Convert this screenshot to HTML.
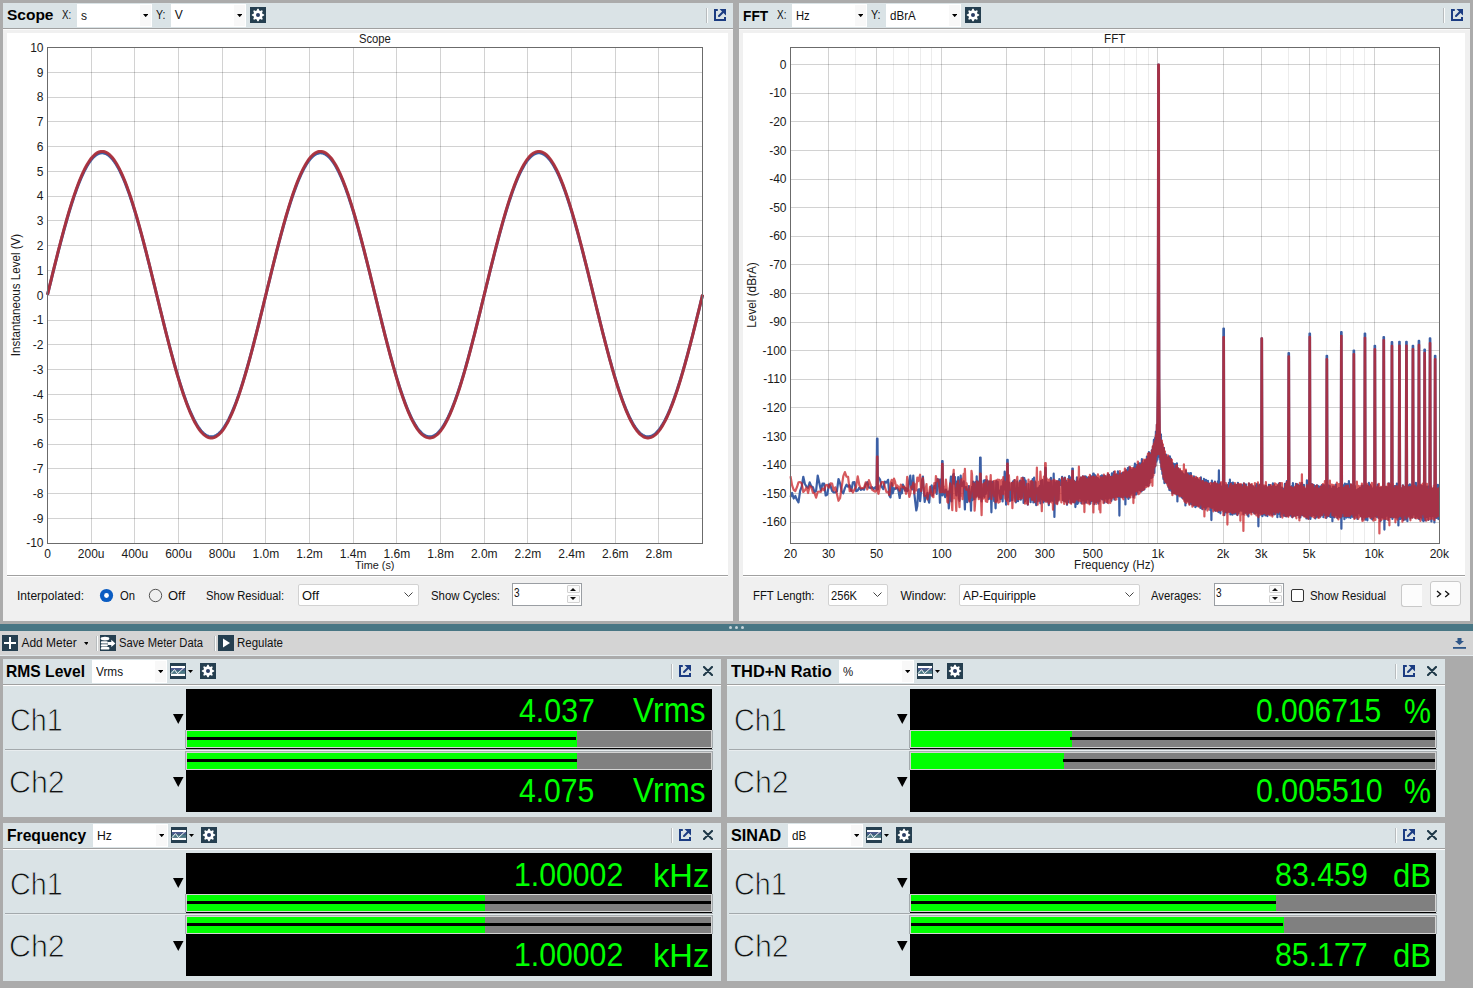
<!DOCTYPE html><html><head><meta charset="utf-8"><style>
*{margin:0;padding:0;box-sizing:border-box}
html,body{width:1473px;height:988px;overflow:hidden;background:#ababab;font-family:"Liberation Sans",sans-serif}
.r{position:absolute}
.t{position:absolute;white-space:nowrap}
svg{position:absolute;left:0;top:0}
</style></head><body>
<div class="r" style="left:3px;top:3px;width:730px;height:25px;background:#dae3e6;"></div>
<div class="r" style="left:3px;top:28px;width:730px;height:1px;background:#a0a0a0;"></div>
<div class="r" style="left:3px;top:29px;width:730px;height:1px;background:#fbfbfb;"></div>
<div class="r" style="left:3px;top:30px;width:730px;height:591px;background:#f0f0f0;"></div>
<div class="r" style="left:7px;top:33px;width:721px;height:542px;background:#fff;"></div>
<div class="r" style="left:7px;top:575px;width:721px;height:1px;background:#a0a0a0;"></div>
<div class="r" style="left:7px;top:576px;width:721px;height:1px;background:#ffffff;"></div>
<div class="r" style="left:739px;top:3px;width:731px;height:25px;background:#dae3e6;"></div>
<div class="r" style="left:739px;top:28px;width:731px;height:1px;background:#a0a0a0;"></div>
<div class="r" style="left:739px;top:29px;width:731px;height:1px;background:#fbfbfb;"></div>
<div class="r" style="left:739px;top:30px;width:731px;height:591px;background:#f0f0f0;"></div>
<div class="r" style="left:743px;top:33px;width:722px;height:542px;background:#fff;"></div>
<div class="r" style="left:743px;top:575px;width:722px;height:1px;background:#a0a0a0;"></div>
<div class="r" style="left:743px;top:576px;width:722px;height:1px;background:#ffffff;"></div>
<div class="r" style="left:0px;top:624px;width:1473px;height:7px;background:#487684;"></div>
<div class="r" style="left:728.8px;top:625.8px;width:3.4px;height:3.4px;border-radius:50%;background:#c5d3d8"></div>
<div class="r" style="left:734.8px;top:625.8px;width:3.4px;height:3.4px;border-radius:50%;background:#c5d3d8"></div>
<div class="r" style="left:740.8px;top:625.8px;width:3.4px;height:3.4px;border-radius:50%;background:#c5d3d8"></div>
<div class="r" style="left:0px;top:631px;width:1473px;height:24px;background:#d4d4d4;"></div>
<div class="r" style="left:0px;top:655px;width:1473px;height:1px;background:#e3eaed;"></div>
<div class="r" style="left:3px;top:659px;width:718px;height:25px;background:#dae3e6;"></div>
<div class="r" style="left:3px;top:684px;width:718px;height:1px;background:#a9b0b3;"></div>
<div class="r" style="left:3px;top:685px;width:718px;height:132px;background:#dae3e6;"></div>
<div class="r" style="left:727px;top:659px;width:718px;height:25px;background:#dae3e6;"></div>
<div class="r" style="left:727px;top:684px;width:718px;height:1px;background:#a9b0b3;"></div>
<div class="r" style="left:727px;top:685px;width:718px;height:132px;background:#dae3e6;"></div>
<div class="r" style="left:3px;top:823px;width:718px;height:25px;background:#dae3e6;"></div>
<div class="r" style="left:3px;top:848px;width:718px;height:1px;background:#a9b0b3;"></div>
<div class="r" style="left:3px;top:849px;width:718px;height:132px;background:#dae3e6;"></div>
<div class="r" style="left:727px;top:823px;width:718px;height:25px;background:#dae3e6;"></div>
<div class="r" style="left:727px;top:848px;width:718px;height:1px;background:#a9b0b3;"></div>
<div class="r" style="left:727px;top:849px;width:718px;height:132px;background:#dae3e6;"></div>
<svg width="1473" height="988" viewBox="0 0 1473 988" style="shape-rendering:auto">
<path d="M47 518.5H703 M47 493.5H703 M47 468.5H703 M47 444.5H703 M47 419.5H703 M47 394.5H703 M47 369.5H703 M47 344.5H703 M47 320.5H703 M47 295.5H703 M47 270.5H703 M47 245.5H703 M47 220.5H703 M47 196.5H703 M47 171.5H703 M47 146.5H703 M47 121.5H703 M47 97.5H703 M47 72.5H703" stroke="#000" stroke-opacity="0.175" stroke-width="1" fill="none"/>
<path d="M91.5 47V544 M134.5 47V544 M178.5 47V544 M222.5 47V544 M265.5 47V544 M309.5 47V544 M353.5 47V544 M396.5 47V544 M440.5 47V544 M484.5 47V544 M527.5 47V544 M571.5 47V544 M615.5 47V544 M658.5 47V544" stroke="#000" stroke-opacity="0.175" stroke-width="1" fill="none"/>
<path d="M47.50,294.82 L48.44,291.00 L49.37,287.18 L50.31,283.36 L51.24,279.56 L52.18,275.76 L53.12,271.98 L54.05,268.21 L54.99,264.47 L55.92,260.74 L56.86,257.04 L57.79,253.37 L58.73,249.73 L59.67,246.12 L60.60,242.54 L61.54,239.01 L62.47,235.51 L63.41,232.06 L64.35,228.65 L65.28,225.29 L66.22,221.98 L67.15,218.73 L68.09,215.53 L69.02,212.38 L69.96,209.30 L70.90,206.28 L71.83,203.32 L72.77,200.43 L73.70,197.61 L74.64,194.85 L75.58,192.17 L76.51,189.57 L77.45,187.04 L78.38,184.59 L79.32,182.22 L80.25,179.93 L81.19,177.72 L82.13,175.60 L83.06,173.57 L84.00,171.62 L84.93,169.76 L85.87,168.00 L86.81,166.32 L87.74,164.74 L88.68,163.25 L89.61,161.86 L90.55,160.57 L91.49,159.37 L92.42,158.27 L93.36,157.27 L94.29,156.37 L95.23,155.57 L96.16,154.87 L97.10,154.27 L98.04,153.77 L98.97,153.38 L99.91,153.09 L100.84,152.90 L101.78,152.81 L102.72,152.83 L103.65,152.95 L104.59,153.17 L105.52,153.50 L106.46,153.93 L107.39,154.46 L108.33,155.09 L109.27,155.82 L110.20,156.66 L111.14,157.59 L112.07,158.62 L113.01,159.76 L113.95,160.99 L114.88,162.32 L115.82,163.74 L116.75,165.26 L117.69,166.87 L118.63,168.58 L119.56,170.37 L120.50,172.26 L121.43,174.24 L122.37,176.30 L123.30,178.45 L124.24,180.68 L125.18,183.00 L126.11,185.40 L127.05,187.87 L127.98,190.43 L128.92,193.06 L129.86,195.76 L130.79,198.54 L131.73,201.39 L132.66,204.30 L133.60,207.28 L134.53,210.32 L135.47,213.42 L136.41,216.59 L137.34,219.81 L138.28,223.08 L139.21,226.41 L140.15,229.78 L141.09,233.20 L142.02,236.67 L142.96,240.18 L143.89,243.73 L144.83,247.32 L145.76,250.94 L146.70,254.59 L147.64,258.27 L148.57,261.98 L149.51,265.71 L150.44,269.47 L151.38,273.24 L152.32,277.02 L153.25,280.82 L154.19,284.64 L155.12,288.45 L156.06,292.27 L157.00,296.10 L157.93,299.92 L158.87,303.74 L159.80,307.55 L160.74,311.36 L161.67,315.15 L162.61,318.93 L163.55,322.69 L164.48,326.43 L165.42,330.14 L166.35,333.83 L167.29,337.50 L168.23,341.13 L169.16,344.73 L170.10,348.29 L171.03,351.81 L171.97,355.29 L172.90,358.73 L173.84,362.12 L174.78,365.47 L175.71,368.76 L176.65,371.99 L177.58,375.18 L178.52,378.30 L179.46,381.36 L180.39,384.36 L181.33,387.30 L182.26,390.17 L183.20,392.97 L184.14,395.70 L185.07,398.35 L186.01,400.93 L186.94,403.43 L187.88,405.86 L188.81,408.20 L189.75,410.46 L190.69,412.64 L191.62,414.73 L192.56,416.74 L193.49,418.66 L194.43,420.48 L195.37,422.22 L196.30,423.86 L197.24,425.41 L198.17,426.87 L199.11,428.23 L200.04,429.49 L200.98,430.66 L201.92,431.72 L202.85,432.69 L203.79,433.56 L204.72,434.33 L205.66,434.99 L206.60,435.56 L207.53,436.02 L208.47,436.38 L209.40,436.64 L210.34,436.79 L211.28,436.84 L212.21,436.79 L213.15,436.64 L214.08,436.38 L215.02,436.02 L215.95,435.56 L216.89,434.99 L217.83,434.33 L218.76,433.56 L219.70,432.69 L220.63,431.72 L221.57,430.66 L222.51,429.49 L223.44,428.23 L224.38,426.87 L225.31,425.41 L226.25,423.86 L227.18,422.22 L228.12,420.48 L229.06,418.66 L229.99,416.74 L230.93,414.73 L231.86,412.64 L232.80,410.46 L233.74,408.20 L234.67,405.86 L235.61,403.43 L236.54,400.93 L237.48,398.35 L238.41,395.70 L239.35,392.97 L240.29,390.17 L241.22,387.30 L242.16,384.36 L243.09,381.36 L244.03,378.30 L244.97,375.18 L245.90,371.99 L246.84,368.76 L247.77,365.47 L248.71,362.12 L249.65,358.73 L250.58,355.29 L251.52,351.81 L252.45,348.29 L253.39,344.73 L254.32,341.13 L255.26,337.50 L256.20,333.83 L257.13,330.14 L258.07,326.43 L259.00,322.69 L259.94,318.93 L260.88,315.15 L261.81,311.36 L262.75,307.55 L263.68,303.74 L264.62,299.92 L265.55,296.10 L266.49,292.27 L267.43,288.45 L268.36,284.64 L269.30,280.82 L270.23,277.02 L271.17,273.24 L272.11,269.47 L273.04,265.71 L273.98,261.98 L274.91,258.27 L275.85,254.59 L276.78,250.94 L277.72,247.32 L278.66,243.73 L279.59,240.18 L280.53,236.67 L281.46,233.20 L282.40,229.78 L283.34,226.41 L284.27,223.08 L285.21,219.81 L286.14,216.59 L287.08,213.42 L288.02,210.32 L288.95,207.28 L289.89,204.30 L290.82,201.39 L291.76,198.54 L292.69,195.76 L293.63,193.06 L294.57,190.43 L295.50,187.87 L296.44,185.40 L297.37,183.00 L298.31,180.68 L299.25,178.45 L300.18,176.30 L301.12,174.24 L302.05,172.26 L302.99,170.37 L303.92,168.58 L304.86,166.87 L305.80,165.26 L306.73,163.74 L307.67,162.32 L308.60,160.99 L309.54,159.76 L310.48,158.62 L311.41,157.59 L312.35,156.66 L313.28,155.82 L314.22,155.09 L315.16,154.46 L316.09,153.93 L317.03,153.50 L317.96,153.17 L318.90,152.95 L319.83,152.83 L320.77,152.81 L321.71,152.90 L322.64,153.09 L323.58,153.38 L324.51,153.77 L325.45,154.27 L326.39,154.87 L327.32,155.57 L328.26,156.37 L329.19,157.27 L330.13,158.27 L331.06,159.37 L332.00,160.57 L332.94,161.86 L333.87,163.25 L334.81,164.74 L335.74,166.32 L336.68,168.00 L337.62,169.76 L338.55,171.62 L339.49,173.57 L340.42,175.60 L341.36,177.72 L342.30,179.93 L343.23,182.22 L344.17,184.59 L345.10,187.04 L346.04,189.57 L346.97,192.17 L347.91,194.85 L348.85,197.61 L349.78,200.43 L350.72,203.32 L351.65,206.28 L352.59,209.30 L353.53,212.38 L354.46,215.53 L355.40,218.73 L356.33,221.98 L357.27,225.29 L358.20,228.65 L359.14,232.06 L360.08,235.51 L361.01,239.01 L361.95,242.54 L362.88,246.12 L363.82,249.73 L364.76,253.37 L365.69,257.04 L366.63,260.74 L367.56,264.47 L368.50,268.21 L369.43,271.98 L370.37,275.76 L371.31,279.56 L372.24,283.36 L373.18,287.18 L374.11,291.00 L375.05,294.82 L375.99,298.65 L376.92,302.47 L377.86,306.28 L378.79,310.09 L379.73,313.89 L380.67,317.67 L381.60,321.44 L382.54,325.18 L383.47,328.91 L384.41,332.61 L385.34,336.28 L386.28,339.92 L387.22,343.53 L388.15,347.10 L389.09,350.64 L390.02,354.14 L390.96,357.59 L391.90,361.00 L392.83,364.36 L393.77,367.67 L394.70,370.92 L395.64,374.12 L396.57,377.27 L397.51,380.35 L398.45,383.37 L399.38,386.33 L400.32,389.22 L401.25,392.04 L402.19,394.79 L403.13,397.47 L404.06,400.08 L405.00,402.61 L405.93,405.06 L406.87,407.43 L407.80,409.72 L408.74,411.93 L409.68,414.05 L410.61,416.08 L411.55,418.03 L412.48,419.88 L413.42,421.65 L414.36,423.33 L415.29,424.91 L416.23,426.39 L417.16,427.79 L418.10,429.08 L419.04,430.28 L419.97,431.38 L420.91,432.38 L421.84,433.28 L422.78,434.08 L423.71,434.78 L424.65,435.38 L425.59,435.88 L426.52,436.27 L427.46,436.56 L428.39,436.75 L429.33,436.84 L430.27,436.82 L431.20,436.70 L432.14,436.48 L433.07,436.15 L434.01,435.72 L434.94,435.19 L435.88,434.56 L436.82,433.83 L437.75,432.99 L438.69,432.06 L439.62,431.02 L440.56,429.89 L441.50,428.66 L442.43,427.33 L443.37,425.91 L444.30,424.39 L445.24,422.78 L446.18,421.07 L447.11,419.28 L448.05,417.39 L448.98,415.41 L449.92,413.35 L450.85,411.20 L451.79,408.97 L452.73,406.65 L453.66,404.25 L454.60,401.77 L455.53,399.22 L456.47,396.59 L457.41,393.89 L458.34,391.11 L459.28,388.26 L460.21,385.35 L461.15,382.37 L462.08,379.33 L463.02,376.22 L463.96,373.06 L464.89,369.84 L465.83,366.57 L466.76,363.24 L467.70,359.87 L468.64,356.44 L469.57,352.98 L470.51,349.47 L471.44,345.92 L472.38,342.33 L473.31,338.71 L474.25,335.06 L475.19,331.38 L476.12,327.67 L477.06,323.94 L477.99,320.18 L478.93,316.41 L479.87,312.62 L480.80,308.82 L481.74,305.01 L482.67,301.20 L483.61,297.37 L484.55,293.55 L485.48,289.73 L486.42,285.91 L487.35,282.09 L488.29,278.29 L489.22,274.50 L490.16,270.72 L491.10,266.96 L492.03,263.22 L492.97,259.51 L493.90,255.81 L494.84,252.15 L495.78,248.52 L496.71,244.92 L497.65,241.36 L498.58,237.84 L499.52,234.36 L500.45,230.92 L501.39,227.53 L502.33,224.18 L503.26,220.89 L504.20,217.65 L505.13,214.47 L506.07,211.35 L507.01,208.28 L507.94,205.28 L508.88,202.35 L509.81,199.48 L510.75,196.68 L511.69,193.95 L512.62,191.30 L513.56,188.72 L514.49,186.21 L515.43,183.79 L516.36,181.45 L517.30,179.18 L518.24,177.01 L519.17,174.91 L520.11,172.91 L521.04,170.99 L521.98,169.16 L522.92,167.43 L523.85,165.78 L524.79,164.23 L525.72,162.78 L526.66,161.42 L527.59,160.16 L528.53,158.99 L529.47,157.92 L530.40,156.96 L531.34,156.09 L532.27,155.32 L533.21,154.66 L534.15,154.09 L535.08,153.63 L536.02,153.27 L536.95,153.01 L537.89,152.86 L538.82,152.81 L539.76,152.86 L540.70,153.01 L541.63,153.27 L542.57,153.63 L543.50,154.09 L544.44,154.66 L545.38,155.32 L546.31,156.09 L547.25,156.96 L548.18,157.92 L549.12,158.99 L550.06,160.16 L550.99,161.42 L551.93,162.78 L552.86,164.23 L553.80,165.78 L554.73,167.43 L555.67,169.16 L556.61,170.99 L557.54,172.91 L558.48,174.91 L559.41,177.01 L560.35,179.18 L561.29,181.45 L562.22,183.79 L563.16,186.21 L564.09,188.72 L565.03,191.30 L565.96,193.95 L566.90,196.68 L567.84,199.48 L568.77,202.35 L569.71,205.28 L570.64,208.28 L571.58,211.35 L572.52,214.47 L573.45,217.65 L574.39,220.89 L575.32,224.18 L576.26,227.53 L577.20,230.92 L578.13,234.36 L579.07,237.84 L580.00,241.36 L580.94,244.92 L581.87,248.52 L582.81,252.15 L583.75,255.81 L584.68,259.51 L585.62,263.22 L586.55,266.96 L587.49,270.72 L588.43,274.50 L589.36,278.29 L590.30,282.09 L591.23,285.91 L592.17,289.73 L593.10,293.55 L594.04,297.37 L594.98,301.20 L595.91,305.01 L596.85,308.82 L597.78,312.62 L598.72,316.41 L599.66,320.18 L600.59,323.94 L601.53,327.67 L602.46,331.38 L603.40,335.06 L604.34,338.71 L605.27,342.33 L606.21,345.92 L607.14,349.47 L608.08,352.98 L609.01,356.44 L609.95,359.87 L610.89,363.24 L611.82,366.57 L612.76,369.84 L613.69,373.06 L614.63,376.22 L615.57,379.33 L616.50,382.37 L617.44,385.35 L618.37,388.26 L619.31,391.11 L620.24,393.89 L621.18,396.59 L622.12,399.22 L623.05,401.77 L623.99,404.25 L624.92,406.65 L625.86,408.97 L626.80,411.20 L627.73,413.35 L628.67,415.41 L629.60,417.39 L630.54,419.28 L631.47,421.07 L632.41,422.78 L633.35,424.39 L634.28,425.91 L635.22,427.33 L636.15,428.66 L637.09,429.89 L638.03,431.02 L638.96,432.06 L639.90,432.99 L640.83,433.83 L641.77,434.56 L642.71,435.19 L643.64,435.72 L644.58,436.15 L645.51,436.48 L646.45,436.70 L647.38,436.82 L648.32,436.84 L649.26,436.75 L650.19,436.56 L651.13,436.27 L652.06,435.88 L653.00,435.38 L653.94,434.78 L654.87,434.08 L655.81,433.28 L656.74,432.38 L657.68,431.38 L658.61,430.28 L659.55,429.08 L660.49,427.79 L661.42,426.39 L662.36,424.91 L663.29,423.33 L664.23,421.65 L665.17,419.88 L666.10,418.03 L667.04,416.08 L667.97,414.05 L668.91,411.93 L669.85,409.72 L670.78,407.43 L671.72,405.06 L672.65,402.61 L673.59,400.08 L674.52,397.47 L675.46,394.79 L676.40,392.04 L677.33,389.22 L678.27,386.33 L679.20,383.37 L680.14,380.35 L681.08,377.27 L682.01,374.12 L682.95,370.92 L683.88,367.67 L684.82,364.36 L685.75,361.00 L686.69,357.59 L687.63,354.14 L688.56,350.64 L689.50,347.10 L690.43,343.53 L691.37,339.92 L692.31,336.28 L693.24,332.61 L694.18,328.91 L695.11,325.18 L696.05,321.44 L696.98,317.67 L697.92,313.89 L698.86,310.09 L699.79,306.28 L700.73,302.47 L701.66,298.65 L702.60,294.82" stroke="#3c60a6" stroke-width="3" fill="none"/>
<path d="M47.50,294.70 L48.44,290.84 L49.37,286.99 L50.31,283.14 L51.24,279.30 L52.18,275.47 L53.12,271.66 L54.05,267.86 L54.99,264.08 L55.92,260.32 L56.86,256.59 L57.79,252.88 L58.73,249.21 L59.67,245.57 L60.60,241.96 L61.54,238.40 L62.47,234.87 L63.41,231.39 L64.35,227.95 L65.28,224.56 L66.22,221.22 L67.15,217.94 L68.09,214.71 L69.02,211.54 L69.96,208.43 L70.90,205.38 L71.83,202.40 L72.77,199.48 L73.70,196.63 L74.64,193.86 L75.58,191.15 L76.51,188.53 L77.45,185.98 L78.38,183.50 L79.32,181.11 L80.25,178.80 L81.19,176.58 L82.13,174.44 L83.06,172.39 L84.00,170.42 L84.93,168.55 L85.87,166.77 L86.81,165.08 L87.74,163.48 L88.68,161.98 L89.61,160.58 L90.55,159.27 L91.49,158.06 L92.42,156.95 L93.36,155.94 L94.29,155.03 L95.23,154.23 L96.16,153.52 L97.10,152.92 L98.04,152.42 L98.97,152.02 L99.91,151.73 L100.84,151.54 L101.78,151.45 L102.72,151.47 L103.65,151.59 L104.59,151.81 L105.52,152.14 L106.46,152.57 L107.39,153.11 L108.33,153.75 L109.27,154.49 L110.20,155.33 L111.14,156.27 L112.07,157.31 L113.01,158.45 L113.95,159.70 L114.88,161.04 L115.82,162.47 L116.75,164.00 L117.69,165.63 L118.63,167.35 L119.56,169.16 L120.50,171.07 L121.43,173.06 L122.37,175.14 L123.30,177.31 L124.24,179.56 L125.18,181.90 L126.11,184.32 L127.05,186.82 L127.98,189.39 L128.92,192.05 L129.86,194.78 L130.79,197.58 L131.73,200.45 L132.66,203.38 L133.60,206.39 L134.53,209.46 L135.47,212.59 L136.41,215.78 L137.34,219.03 L138.28,222.33 L139.21,225.69 L140.15,229.09 L141.09,232.54 L142.02,236.04 L142.96,239.58 L143.89,243.16 L144.83,246.78 L145.76,250.43 L146.70,254.12 L147.64,257.83 L148.57,261.57 L149.51,265.33 L150.44,269.12 L151.38,272.93 L152.32,276.75 L153.25,280.58 L154.19,284.42 L155.12,288.27 L156.06,292.13 L157.00,295.99 L157.93,299.84 L158.87,303.70 L159.80,307.54 L160.74,311.38 L161.67,315.20 L162.61,319.01 L163.55,322.81 L164.48,326.58 L165.42,330.33 L166.35,334.05 L167.29,337.74 L168.23,341.41 L169.16,345.04 L170.10,348.63 L171.03,352.18 L171.97,355.70 L172.90,359.16 L173.84,362.59 L174.78,365.96 L175.71,369.28 L176.65,372.54 L177.58,375.75 L178.52,378.90 L179.46,381.99 L180.39,385.02 L181.33,387.98 L182.26,390.88 L183.20,393.70 L184.14,396.45 L185.07,399.13 L186.01,401.73 L186.94,404.26 L187.88,406.70 L188.81,409.07 L189.75,411.35 L190.69,413.55 L191.62,415.66 L192.56,417.68 L193.49,419.61 L194.43,421.46 L195.37,423.21 L196.30,424.87 L197.24,426.43 L198.17,427.90 L199.11,429.27 L200.04,430.54 L200.98,431.72 L201.92,432.80 L202.85,433.77 L203.79,434.65 L204.72,435.42 L205.66,436.09 L206.60,436.66 L207.53,437.13 L208.47,437.49 L209.40,437.75 L210.34,437.91 L211.28,437.96 L212.21,437.91 L213.15,437.75 L214.08,437.49 L215.02,437.13 L215.95,436.66 L216.89,436.09 L217.83,435.42 L218.76,434.65 L219.70,433.77 L220.63,432.80 L221.57,431.72 L222.51,430.54 L223.44,429.27 L224.38,427.90 L225.31,426.43 L226.25,424.87 L227.18,423.21 L228.12,421.46 L229.06,419.61 L229.99,417.68 L230.93,415.66 L231.86,413.55 L232.80,411.35 L233.74,409.07 L234.67,406.70 L235.61,404.26 L236.54,401.73 L237.48,399.13 L238.41,396.45 L239.35,393.70 L240.29,390.88 L241.22,387.98 L242.16,385.02 L243.09,381.99 L244.03,378.90 L244.97,375.75 L245.90,372.54 L246.84,369.28 L247.77,365.96 L248.71,362.59 L249.65,359.16 L250.58,355.70 L251.52,352.18 L252.45,348.63 L253.39,345.04 L254.32,341.41 L255.26,337.74 L256.20,334.05 L257.13,330.33 L258.07,326.58 L259.00,322.81 L259.94,319.01 L260.88,315.20 L261.81,311.38 L262.75,307.54 L263.68,303.70 L264.62,299.84 L265.55,295.99 L266.49,292.13 L267.43,288.27 L268.36,284.42 L269.30,280.58 L270.23,276.75 L271.17,272.93 L272.11,269.12 L273.04,265.33 L273.98,261.57 L274.91,257.83 L275.85,254.12 L276.78,250.43 L277.72,246.78 L278.66,243.16 L279.59,239.58 L280.53,236.04 L281.46,232.54 L282.40,229.09 L283.34,225.69 L284.27,222.33 L285.21,219.03 L286.14,215.78 L287.08,212.59 L288.02,209.46 L288.95,206.39 L289.89,203.38 L290.82,200.45 L291.76,197.58 L292.69,194.78 L293.63,192.05 L294.57,189.39 L295.50,186.82 L296.44,184.32 L297.37,181.90 L298.31,179.56 L299.25,177.31 L300.18,175.14 L301.12,173.06 L302.05,171.07 L302.99,169.16 L303.92,167.35 L304.86,165.63 L305.80,164.00 L306.73,162.47 L307.67,161.04 L308.60,159.70 L309.54,158.45 L310.48,157.31 L311.41,156.27 L312.35,155.33 L313.28,154.49 L314.22,153.75 L315.16,153.11 L316.09,152.57 L317.03,152.14 L317.96,151.81 L318.90,151.59 L319.83,151.47 L320.77,151.45 L321.71,151.54 L322.64,151.73 L323.58,152.02 L324.51,152.42 L325.45,152.92 L326.39,153.52 L327.32,154.23 L328.26,155.03 L329.19,155.94 L330.13,156.95 L331.06,158.06 L332.00,159.27 L332.94,160.58 L333.87,161.98 L334.81,163.48 L335.74,165.08 L336.68,166.77 L337.62,168.55 L338.55,170.42 L339.49,172.39 L340.42,174.44 L341.36,176.58 L342.30,178.80 L343.23,181.11 L344.17,183.50 L345.10,185.98 L346.04,188.53 L346.97,191.15 L347.91,193.86 L348.85,196.63 L349.78,199.48 L350.72,202.40 L351.65,205.38 L352.59,208.43 L353.53,211.54 L354.46,214.71 L355.40,217.94 L356.33,221.22 L357.27,224.56 L358.20,227.95 L359.14,231.39 L360.08,234.87 L361.01,238.40 L361.95,241.96 L362.88,245.57 L363.82,249.21 L364.76,252.88 L365.69,256.59 L366.63,260.32 L367.56,264.08 L368.50,267.86 L369.43,271.66 L370.37,275.47 L371.31,279.30 L372.24,283.14 L373.18,286.99 L374.11,290.84 L375.05,294.70 L375.99,298.56 L376.92,302.41 L377.86,306.26 L378.79,310.10 L379.73,313.93 L380.67,317.75 L381.60,321.54 L382.54,325.32 L383.47,329.08 L384.41,332.81 L385.34,336.52 L386.28,340.19 L387.22,343.83 L388.15,347.44 L389.09,351.00 L390.02,354.53 L390.96,358.01 L391.90,361.45 L392.83,364.84 L393.77,368.18 L394.70,371.46 L395.64,374.69 L396.57,377.86 L397.51,380.97 L398.45,384.02 L399.38,387.00 L400.32,389.92 L401.25,392.77 L402.19,395.54 L403.13,398.25 L404.06,400.87 L405.00,403.43 L405.93,405.90 L406.87,408.29 L407.80,410.60 L408.74,412.82 L409.68,414.96 L410.61,417.01 L411.55,418.98 L412.48,420.85 L413.42,422.63 L414.36,424.32 L415.29,425.92 L416.23,427.42 L417.16,428.82 L418.10,430.13 L419.04,431.34 L419.97,432.45 L420.91,433.46 L421.84,434.37 L422.78,435.17 L423.71,435.88 L424.65,436.48 L425.59,436.98 L426.52,437.38 L427.46,437.67 L428.39,437.87 L429.33,437.95 L430.27,437.93 L431.20,437.81 L432.14,437.59 L433.07,437.26 L434.01,436.83 L434.94,436.29 L435.88,435.66 L436.82,434.92 L437.75,434.07 L438.69,433.13 L439.62,432.09 L440.56,430.95 L441.50,429.70 L442.43,428.37 L443.37,426.93 L444.30,425.40 L445.24,423.77 L446.18,422.05 L447.11,420.24 L448.05,418.33 L448.98,416.34 L449.92,414.26 L450.85,412.09 L451.79,409.84 L452.73,407.50 L453.66,405.08 L454.60,402.58 L455.53,400.01 L456.47,397.35 L457.41,394.63 L458.34,391.83 L459.28,388.95 L460.21,386.02 L461.15,383.01 L462.08,379.94 L463.02,376.81 L463.96,373.62 L464.89,370.37 L465.83,367.07 L466.76,363.72 L467.70,360.31 L468.64,356.86 L469.57,353.36 L470.51,349.82 L471.44,346.24 L472.38,342.62 L473.31,338.97 L474.25,335.28 L475.19,331.57 L476.12,327.83 L477.06,324.07 L477.99,320.28 L478.93,316.48 L479.87,312.66 L480.80,308.82 L481.74,304.98 L482.67,301.13 L483.61,297.27 L484.55,293.41 L485.48,289.56 L486.42,285.71 L487.35,281.86 L488.29,278.02 L489.22,274.20 L490.16,270.39 L491.10,266.59 L492.03,262.82 L492.97,259.07 L493.90,255.35 L494.84,251.66 L495.78,247.99 L496.71,244.36 L497.65,240.77 L498.58,237.22 L499.52,233.70 L500.45,230.24 L501.39,226.82 L502.33,223.44 L503.26,220.12 L504.20,216.86 L505.13,213.65 L506.07,210.50 L507.01,207.41 L507.94,204.38 L508.88,201.42 L509.81,198.52 L510.75,195.70 L511.69,192.95 L512.62,190.27 L513.56,187.67 L514.49,185.14 L515.43,182.70 L516.36,180.33 L517.30,178.05 L518.24,175.85 L519.17,173.74 L520.11,171.72 L521.04,169.79 L521.98,167.94 L522.92,166.19 L523.85,164.54 L524.79,162.97 L525.72,161.50 L526.66,160.13 L527.59,158.86 L528.53,157.68 L529.47,156.61 L530.40,155.63 L531.34,154.75 L532.27,153.98 L533.21,153.31 L534.15,152.74 L535.08,152.27 L536.02,151.91 L536.95,151.65 L537.89,151.50 L538.82,151.44 L539.76,151.50 L540.70,151.65 L541.63,151.91 L542.57,152.27 L543.50,152.74 L544.44,153.31 L545.38,153.98 L546.31,154.75 L547.25,155.63 L548.18,156.61 L549.12,157.68 L550.06,158.86 L550.99,160.13 L551.93,161.50 L552.86,162.97 L553.80,164.54 L554.73,166.19 L555.67,167.94 L556.61,169.79 L557.54,171.72 L558.48,173.74 L559.41,175.85 L560.35,178.05 L561.29,180.33 L562.22,182.70 L563.16,185.14 L564.09,187.67 L565.03,190.27 L565.96,192.95 L566.90,195.70 L567.84,198.52 L568.77,201.42 L569.71,204.38 L570.64,207.41 L571.58,210.50 L572.52,213.65 L573.45,216.86 L574.39,220.12 L575.32,223.44 L576.26,226.82 L577.20,230.24 L578.13,233.70 L579.07,237.22 L580.00,240.77 L580.94,244.36 L581.87,247.99 L582.81,251.66 L583.75,255.35 L584.68,259.07 L585.62,262.82 L586.55,266.59 L587.49,270.39 L588.43,274.20 L589.36,278.02 L590.30,281.86 L591.23,285.71 L592.17,289.56 L593.10,293.41 L594.04,297.27 L594.98,301.13 L595.91,304.98 L596.85,308.82 L597.78,312.66 L598.72,316.48 L599.66,320.28 L600.59,324.07 L601.53,327.83 L602.46,331.57 L603.40,335.28 L604.34,338.97 L605.27,342.62 L606.21,346.24 L607.14,349.82 L608.08,353.36 L609.01,356.86 L609.95,360.31 L610.89,363.72 L611.82,367.07 L612.76,370.37 L613.69,373.62 L614.63,376.81 L615.57,379.94 L616.50,383.01 L617.44,386.02 L618.37,388.95 L619.31,391.83 L620.24,394.63 L621.18,397.35 L622.12,400.01 L623.05,402.58 L623.99,405.08 L624.92,407.50 L625.86,409.84 L626.80,412.09 L627.73,414.26 L628.67,416.34 L629.60,418.33 L630.54,420.24 L631.47,422.05 L632.41,423.77 L633.35,425.40 L634.28,426.93 L635.22,428.37 L636.15,429.70 L637.09,430.95 L638.03,432.09 L638.96,433.13 L639.90,434.07 L640.83,434.92 L641.77,435.66 L642.71,436.29 L643.64,436.83 L644.58,437.26 L645.51,437.59 L646.45,437.81 L647.38,437.93 L648.32,437.95 L649.26,437.87 L650.19,437.67 L651.13,437.38 L652.06,436.98 L653.00,436.48 L653.94,435.88 L654.87,435.17 L655.81,434.37 L656.74,433.46 L657.68,432.45 L658.61,431.34 L659.55,430.13 L660.49,428.82 L661.42,427.42 L662.36,425.92 L663.29,424.32 L664.23,422.63 L665.17,420.85 L666.10,418.98 L667.04,417.01 L667.97,414.96 L668.91,412.82 L669.85,410.60 L670.78,408.29 L671.72,405.90 L672.65,403.43 L673.59,400.87 L674.52,398.25 L675.46,395.54 L676.40,392.77 L677.33,389.92 L678.27,387.00 L679.20,384.02 L680.14,380.97 L681.08,377.86 L682.01,374.69 L682.95,371.46 L683.88,368.18 L684.82,364.84 L685.75,361.45 L686.69,358.01 L687.63,354.53 L688.56,351.00 L689.50,347.44 L690.43,343.83 L691.37,340.19 L692.31,336.52 L693.24,332.81 L694.18,329.08 L695.11,325.32 L696.05,321.54 L696.98,317.75 L697.92,313.93 L698.86,310.10 L699.79,306.26 L700.73,302.41 L701.66,298.56 L702.60,294.70" stroke="#ad2f3a" stroke-width="3" fill="none" opacity="0.95"/>
<rect x="47.5" y="47.5" width="655" height="496" stroke="#6b6b6b" stroke-width="1" fill="none"/>
<path d="M790 64.5H1440 M790 93.5H1440 M790 121.5H1440 M790 150.5H1440 M790 179.5H1440 M790 207.5H1440 M790 236.5H1440 M790 264.5H1440 M790 293.5H1440 M790 322.5H1440 M790 350.5H1440 M790 379.5H1440 M790 407.5H1440 M790 436.5H1440 M790 465.5H1440 M790 493.5H1440 M790 522.5H1440" stroke="#000" stroke-opacity="0.175" stroke-width="1" fill="none"/>
<path d="M855.5 47V544 M893.5 47V544 M908.5 47V544 M920.5 47V544 M931.5 47V544 M1071.5 47V544 M1109.5 47V544 M1124.5 47V544 M1136.5 47V544 M1148.5 47V544 M1288.5 47V544 M1326.5 47V544 M1340.5 47V544 M1353.5 47V544 M1364.5 47V544" stroke="#000" stroke-opacity="0.075" stroke-width="1" fill="none"/>
<path d="M828.5 47V544 M876.5 47V544 M941.5 47V544 M1006.5 47V544 M1044.5 47V544 M1092.5 47V544 M1157.5 47V544 M1223.5 47V544 M1261.5 47V544 M1309.5 47V544 M1374.5 47V544" stroke="#000" stroke-opacity="0.175" stroke-width="1" fill="none"/>
<path d="M790.5 497.0L792.1 493.0L793.7 498.5L795.3 496.0L796.9 499.7L798.5 502.3L800.1 491.0L801.7 486.7L803.3 476.8L804.9 484.0L806.5 486.6L808.1 487.9L809.7 482.4L811.3 486.3L812.9 487.2L814.5 492.1L816.1 490.9L817.7 475.5L819.3 483.0L820.9 490.2L822.5 483.7L824.1 483.5L825.7 495.5L827.3 494.6L828.9 484.3L830.5 485.8L832.1 490.9L833.7 492.4L835.3 492.4L836.9 491.3L838.5 479.0L840.1 483.3L841.7 491.3L843.3 493.3L844.9 488.1L846.5 484.7L848.1 486.7L849.7 485.2L851.3 490.9L852.9 482.3L854.5 482.1L856.1 491.1L857.7 490.5L859.3 487.6L860.9 489.8L862.5 488.8L864.1 489.7L865.7 484.3L867.3 482.2L868.9 487.4L870.5 488.1L872.1 487.1L873.7 489.0L875.3 487.1L876.6 489.5L877.0 438.7L877.5 438.7L877.9 489.5L876.9 485.3L878.5 477.3L880.1 479.7L881.7 486.7L883.3 489.1L884.9 481.7L886.5 482.5L888.1 479.8L889.3 495.4L890.5 497.3L891.7 483.2L892.8 493.3L894.0 488.2L895.1 488.8L896.3 487.8L897.4 488.2L898.5 490.8L899.7 498.0L900.8 488.7L901.9 493.3L902.9 484.7L904.0 486.9L905.1 490.7L906.1 488.2L907.2 491.3L908.2 490.0L909.3 480.2L910.3 475.6L911.3 487.6L912.3 489.4L913.3 475.5L914.3 493.1L915.3 502.2L916.3 510.5L917.3 506.1L918.2 489.8L919.2 489.2L920.1 501.2L921.1 490.4L922.0 480.8L922.9 476.6L923.8 490.8L924.7 501.9L925.6 495.8L926.5 497.5L927.4 492.9L928.3 499.6L929.2 502.7L930.0 493.4L930.9 486.9L931.7 485.4L932.6 495.6L933.4 489.6L934.3 486.2L935.1 487.9L935.9 482.8L936.7 494.0L937.5 479.1L938.3 486.0L939.1 479.6L939.9 502.8L940.7 479.7L941.4 487.2L941.7 489.7L942.1 461.0L942.6 461.0L943.0 489.7L942.2 495.4L943.0 488.1L943.7 490.3L944.5 495.0L945.2 497.1L945.9 489.5L946.7 495.4L947.4 493.6L948.1 491.6L948.8 508.5L949.5 498.9L950.2 484.3L950.9 476.7L951.6 501.4L952.3 484.0L953.0 475.5L953.7 473.8L954.3 483.7L955.0 477.1L955.6 489.0L956.3 495.5L956.9 481.6L957.6 490.2L958.2 477.1L958.8 496.5L959.5 500.8L960.1 488.4L960.7 475.6L961.3 485.4L961.9 486.1L962.5 483.2L963.1 483.4L963.7 481.3L964.3 496.3L964.9 509.5L965.5 488.0L966.0 486.9L966.6 491.4L967.2 502.1L967.7 498.5L968.3 493.9L968.8 486.0L969.4 493.0L969.9 501.4L970.4 493.2L971.0 510.7L971.5 491.7L972.0 486.9L972.5 500.2L973.0 481.5L973.6 485.0L974.1 483.6L974.6 499.1L975.3 482.2L976.0 496.7L976.7 476.4L977.4 495.1L978.1 481.6L978.8 497.3L979.5 481.8L979.7 490.2L980.1 457.6L980.6 457.6L981.0 490.2L980.2 497.3L980.9 482.4L981.6 501.5L982.3 492.3L983.0 495.6L983.7 480.6L984.4 496.9L985.1 480.0L985.8 493.9L986.5 484.7L987.2 480.3L987.9 483.8L988.6 499.2L989.3 481.9L990.0 498.4L990.7 481.4L991.4 512.3L992.1 483.1L992.8 481.8L993.5 482.2L994.2 501.2L994.9 494.1L995.6 508.3L996.3 481.1L997.0 500.7L997.7 481.9L998.4 492.0L999.1 490.4L999.8 495.7L1000.5 498.9L1001.2 486.4L1001.9 490.1L1002.6 501.5L1003.3 481.3L1004.0 489.4L1004.7 471.6L1005.4 485.0L1006.1 504.7L1006.8 490.4L1007.2 459.9L1007.7 459.9L1008.1 490.4L1006.8 500.1L1007.5 479.2L1008.2 496.9L1008.9 482.4L1009.6 501.1L1010.3 493.4L1011.0 500.3L1011.7 483.1L1012.4 500.1L1013.1 481.3L1013.8 484.1L1014.5 480.2L1015.2 498.2L1015.9 502.4L1016.6 498.0L1017.3 481.3L1018.0 501.1L1018.7 488.0L1019.4 497.0L1020.1 480.7L1020.8 499.7L1021.5 481.3L1022.2 496.5L1022.9 477.5L1023.6 503.0L1024.3 478.1L1025.0 501.4L1025.7 480.7L1026.4 499.2L1027.1 494.2L1027.8 504.6L1028.5 484.2L1029.2 496.8L1029.9 491.0L1030.6 502.2L1031.3 481.6L1032.0 499.5L1032.7 479.0L1033.4 502.4L1034.1 477.7L1034.8 502.1L1035.5 482.4L1036.2 505.1L1036.9 488.9L1037.6 501.2L1038.3 487.8L1039.0 499.3L1039.7 486.2L1040.4 503.3L1041.1 480.9L1041.8 499.1L1042.5 480.2L1043.2 502.3L1043.9 496.9L1044.6 501.2L1044.8 490.9L1045.2 467.9L1045.7 467.9L1046.1 490.9L1045.3 482.5L1046.0 500.1L1046.7 482.2L1047.4 501.6L1048.1 482.7L1048.8 505.2L1049.5 482.8L1050.2 501.4L1050.9 477.8L1051.6 500.5L1052.3 496.4L1053.0 500.9L1053.7 473.7L1054.4 516.9L1055.1 482.8L1055.8 499.3L1056.5 481.7L1057.2 503.3L1057.9 481.3L1058.6 499.6L1059.3 479.2L1060.0 484.9L1060.7 480.9L1061.4 485.1L1062.1 476.8L1062.8 500.1L1063.5 478.5L1064.2 501.2L1064.9 477.7L1065.6 501.4L1066.3 480.8L1067.0 504.8L1067.7 483.2L1068.4 502.1L1069.1 476.1L1069.8 498.7L1070.5 477.5L1071.2 502.8L1071.9 479.1L1071.9 490.6L1072.3 468.5L1072.8 468.5L1073.2 490.6L1072.4 500.8L1072.9 479.3L1073.4 502.1L1073.9 480.6L1074.4 499.6L1074.9 481.8L1075.4 507.1L1075.9 481.7L1076.4 500.8L1076.9 477.4L1077.4 503.9L1077.9 493.6L1078.4 502.7L1078.9 481.4L1079.4 490.4L1079.9 479.1L1080.4 498.4L1080.9 477.5L1081.4 503.3L1081.9 480.2L1082.4 500.4L1082.9 476.3L1083.4 499.3L1083.9 479.3L1084.4 503.5L1084.9 476.3L1085.4 502.3L1085.9 476.5L1086.4 502.3L1086.9 479.4L1087.4 496.4L1087.9 477.7L1088.4 499.4L1088.9 477.6L1089.4 502.8L1089.9 477.7L1090.4 503.6L1090.9 476.0L1091.4 501.1L1091.9 477.3L1092.4 500.6L1092.8 489.4L1093.2 473.6L1093.7 473.6L1094.1 489.4L1092.9 478.2L1093.4 501.3L1093.9 480.1L1094.4 504.2L1094.9 475.0L1095.4 497.0L1095.9 476.5L1096.4 501.9L1096.9 477.8L1097.4 496.0L1097.9 478.2L1098.4 503.6L1098.9 479.4L1099.4 501.1L1099.9 479.9L1100.4 497.9L1100.9 476.2L1101.4 498.6L1101.9 475.3L1102.4 499.5L1102.9 476.7L1103.4 492.8L1103.9 476.2L1104.4 502.7L1104.9 475.9L1105.4 498.2L1105.9 477.2L1106.4 498.6L1106.9 477.9L1107.4 502.6L1107.9 474.3L1108.4 498.7L1108.9 474.8L1109.4 496.2L1109.9 476.5L1110.4 497.9L1110.9 478.4L1111.4 500.8L1111.9 473.4L1112.4 495.7L1112.9 474.7L1113.4 497.3L1113.9 471.8L1114.4 499.4L1114.9 475.3L1115.4 496.9L1115.9 474.6L1116.4 496.6L1116.9 474.5L1117.4 496.8L1117.9 471.3L1118.4 496.6L1118.9 473.4L1119.4 515.6L1119.9 473.9L1120.4 496.7L1120.9 474.1L1121.4 495.5L1121.9 473.3L1122.4 497.2L1122.9 472.9L1123.4 495.7L1123.9 473.9L1124.4 497.1L1124.9 472.0L1125.4 504.5L1125.9 470.6L1126.4 496.7L1126.9 470.2L1127.4 496.4L1127.9 468.0L1128.4 498.9L1128.9 467.4L1129.4 497.5L1129.9 467.5L1130.4 494.4L1130.9 469.5L1131.4 493.5L1131.9 470.0L1132.4 491.6L1132.9 469.4L1133.4 497.3L1133.9 467.4L1134.4 495.5L1134.9 463.7L1135.4 491.3L1135.9 467.2L1136.4 494.5L1136.9 465.2L1137.4 492.4L1137.9 466.3L1138.4 488.6L1138.9 463.7L1139.4 490.0L1139.9 463.3L1140.4 490.8L1140.9 466.4L1141.4 491.5L1141.9 459.2L1142.4 490.3L1142.9 463.2L1143.4 489.4L1143.9 464.2L1144.4 489.3L1144.9 460.6L1145.4 482.4L1145.9 460.3L1146.4 485.3L1146.9 456.6L1147.4 485.4L1147.9 457.7L1148.4 485.8L1148.9 452.1L1149.4 482.9L1149.9 456.6L1150.4 478.1L1150.9 453.2L1151.4 477.8L1151.9 450.1L1152.4 477.3L1152.9 446.7L1153.4 471.7L1153.9 439.8L1154.4 473.0L1154.9 438.1L1155.4 466.1L1155.9 431.5L1156.4 461.7L1156.9 424.5L1157.2 439.3L1157.7 385.0L1158.0 236.2L1158.2 64.7L1158.9 64.7L1159.0 236.2L1159.3 385.0L1159.8 439.3L1157.4 459.7L1157.9 424.5L1158.4 451.0L1158.9 419.9L1159.4 456.8L1159.9 431.0L1160.4 462.8L1160.9 434.3L1161.4 469.2L1161.9 442.7L1162.4 473.9L1162.9 448.5L1163.4 479.0L1163.9 447.8L1164.4 483.1L1164.9 454.4L1165.4 481.5L1165.9 454.6L1166.4 482.8L1166.9 457.3L1167.4 482.0L1167.9 459.2L1168.4 487.1L1168.9 456.5L1169.4 490.1L1169.9 456.4L1170.4 489.3L1170.9 458.5L1171.4 491.1L1171.9 463.0L1172.4 493.4L1172.9 463.3L1173.4 489.8L1173.9 464.7L1174.4 493.4L1174.9 464.0L1175.4 492.8L1175.9 468.9L1176.4 493.9L1176.9 463.3L1177.4 501.4L1177.9 468.1L1178.4 493.8L1178.9 470.2L1179.4 495.5L1179.9 470.0L1180.4 494.4L1180.9 474.2L1181.4 497.0L1181.9 472.2L1182.4 498.1L1182.9 473.6L1183.4 497.7L1183.9 474.3L1184.4 499.8L1184.9 474.7L1185.4 505.5L1185.9 470.9L1186.4 498.5L1186.9 477.5L1187.4 501.0L1187.9 473.4L1188.4 500.6L1188.9 473.4L1189.4 503.8L1189.9 473.5L1190.4 502.2L1190.9 473.0L1191.4 504.3L1191.9 479.2L1192.4 503.7L1192.9 478.2L1193.4 505.5L1193.9 476.4L1194.4 501.3L1194.9 479.9L1195.4 507.2L1195.9 478.6L1196.4 506.0L1196.9 477.9L1197.4 504.2L1197.9 479.8L1198.4 505.8L1198.9 480.4L1199.4 504.1L1199.9 480.7L1200.4 507.9L1200.9 477.4L1201.4 504.8L1201.9 481.2L1202.4 509.2L1202.9 482.1L1203.4 506.6L1203.9 478.9L1204.4 507.1L1204.9 481.4L1205.4 509.3L1205.9 479.9L1206.4 507.7L1206.9 483.3L1207.4 506.1L1207.9 480.8L1208.4 506.3L1208.9 483.4L1209.4 506.0L1209.9 488.1L1210.4 510.2L1210.9 485.7L1211.4 520.1L1211.9 480.7L1212.4 507.7L1212.9 483.3L1213.4 506.8L1213.9 486.3L1214.4 510.0L1214.9 481.6L1215.4 510.8L1215.9 484.2L1216.4 510.4L1216.9 485.5L1217.4 510.3L1217.9 481.4L1218.4 512.1L1218.9 470.4L1219.4 511.7L1219.9 483.0L1220.4 513.3L1220.9 486.3L1221.4 509.2L1221.9 486.7L1222.4 507.1L1222.9 482.9L1223.0 497.8L1223.4 328.6L1223.9 328.6L1224.3 497.8L1223.4 511.4L1223.9 486.2L1224.4 515.1L1224.9 487.9L1225.4 512.2L1225.9 485.4L1226.4 512.4L1226.9 485.6L1227.4 512.5L1227.9 485.2L1228.4 507.3L1228.9 482.8L1229.4 511.6L1229.9 479.7L1230.4 514.4L1230.9 484.6L1231.4 511.4L1231.9 483.0L1232.4 514.7L1232.9 482.5L1233.4 511.7L1233.9 484.5L1234.4 513.7L1234.9 484.5L1235.4 510.4L1235.9 486.7L1236.4 514.1L1236.9 484.9L1237.4 515.1L1237.9 482.8L1238.4 513.3L1238.9 487.0L1239.4 511.0L1239.9 484.8L1240.4 508.2L1240.9 488.1L1241.4 510.7L1241.9 485.1L1242.4 509.7L1242.9 488.5L1243.4 514.2L1243.9 483.3L1244.4 512.0L1244.9 487.0L1245.4 512.8L1245.9 484.3L1246.4 509.3L1246.9 488.2L1247.4 515.0L1247.9 490.0L1248.4 516.5L1248.9 483.7L1249.4 511.9L1249.9 487.1L1250.4 511.6L1250.9 484.9L1251.4 512.3L1251.9 486.9L1252.4 511.7L1252.9 486.2L1253.4 512.0L1253.9 489.9L1254.4 513.5L1254.9 487.4L1255.4 513.6L1255.9 485.6L1256.4 512.6L1256.9 484.0L1257.4 511.5L1257.9 485.4L1258.4 526.3L1258.9 485.7L1259.4 513.1L1259.9 484.6L1260.4 508.5L1260.9 485.3L1261.1 499.8L1261.5 338.4L1262.0 338.4L1262.4 499.8L1261.4 514.5L1261.9 484.9L1262.4 516.2L1262.9 487.1L1263.4 514.5L1263.9 486.4L1264.4 511.9L1264.9 487.7L1265.4 515.5L1265.9 485.9L1266.4 512.0L1266.9 487.6L1267.4 516.1L1267.9 490.4L1268.4 512.5L1268.9 484.8L1269.4 513.9L1269.9 485.0L1270.4 512.9L1270.9 487.3L1271.4 513.8L1271.9 486.8L1272.4 515.0L1272.9 483.3L1273.4 512.7L1273.9 484.7L1274.4 514.3L1274.9 487.5L1275.4 512.7L1275.9 486.9L1276.4 512.3L1276.9 487.2L1277.4 517.2L1277.9 485.5L1278.4 512.0L1278.9 483.7L1279.4 514.1L1279.9 483.0L1280.4 517.0L1280.9 489.4L1281.4 513.6L1281.9 487.5L1282.4 513.3L1282.9 488.5L1283.4 515.7L1283.9 489.7L1284.4 513.0L1284.9 483.9L1285.4 516.2L1285.9 483.7L1286.4 516.5L1286.9 481.1L1287.4 515.3L1287.9 485.3L1288.1 500.5L1288.5 353.2L1289.0 353.2L1289.4 500.5L1288.4 515.6L1288.9 482.1L1289.4 513.9L1289.9 487.7L1290.4 515.1L1290.9 487.1L1291.4 516.3L1291.9 486.1L1292.4 517.3L1292.9 483.2L1293.4 516.1L1293.9 487.5L1294.4 513.5L1294.9 487.8L1295.4 515.8L1295.9 483.9L1296.4 515.0L1296.9 486.7L1297.4 515.1L1297.9 484.5L1298.4 514.9L1298.9 485.9L1299.4 517.6L1299.9 488.4L1300.4 517.4L1300.9 484.2L1301.4 514.0L1301.9 482.8L1302.4 515.1L1302.9 487.3L1303.4 515.3L1303.9 484.8L1304.4 515.8L1304.9 489.7L1305.4 515.9L1305.9 489.1L1306.4 518.5L1306.9 480.3L1307.4 515.4L1307.9 486.2L1308.4 518.7L1308.9 487.1L1309.1 501.1L1309.5 333.5L1310.0 333.5L1310.4 501.1L1309.4 515.1L1309.9 486.4L1310.4 518.9L1310.9 488.8L1311.4 516.5L1311.9 484.0L1312.4 513.0L1312.9 487.6L1313.4 514.9L1313.9 485.1L1314.4 515.5L1314.9 487.9L1315.4 518.5L1315.9 486.0L1316.4 516.9L1316.9 485.3L1317.4 516.4L1317.9 485.8L1318.4 517.1L1318.9 488.3L1319.4 515.2L1319.9 486.5L1320.4 516.7L1320.9 488.8L1321.4 514.8L1321.9 485.2L1322.4 514.6L1322.9 486.4L1323.4 517.2L1323.9 485.2L1324.4 514.9L1324.9 486.7L1325.4 511.7L1325.9 489.7L1326.2 501.2L1326.6 355.8L1327.1 355.8L1327.5 501.2L1326.4 517.8L1326.9 483.1L1327.4 516.5L1327.9 487.3L1328.4 515.5L1328.9 485.6L1329.4 516.2L1329.9 486.0L1330.4 517.0L1330.9 488.5L1331.4 516.8L1331.9 490.4L1332.4 521.2L1332.9 486.7L1333.4 515.8L1333.9 486.8L1334.4 517.3L1334.9 490.0L1335.4 514.4L1335.9 484.5L1336.4 514.9L1336.9 488.8L1337.4 518.1L1337.9 490.5L1338.4 514.7L1338.9 487.8L1339.4 516.6L1339.9 488.7L1340.4 517.5L1340.7 501.4L1341.1 332.1L1341.6 332.1L1342.0 501.4L1340.9 487.1L1341.4 528.7L1341.9 488.1L1342.4 516.5L1342.9 485.0L1343.4 515.5L1343.9 486.1L1344.4 519.2L1344.9 483.6L1345.4 516.2L1345.9 486.4L1346.4 517.6L1346.9 484.0L1347.4 514.0L1347.9 485.0L1348.4 517.3L1348.9 481.1L1349.4 512.0L1349.9 487.2L1350.4 518.0L1350.9 484.6L1351.4 515.7L1351.9 487.2L1352.4 516.8L1352.9 485.9L1353.2 501.5L1353.6 350.6L1354.1 350.6L1354.5 501.5L1353.4 513.3L1353.9 487.8L1354.4 517.8L1354.9 485.9L1355.4 515.6L1355.9 492.2L1356.4 513.7L1356.9 490.2L1357.4 518.9L1357.9 489.3L1358.4 512.7L1358.9 488.8L1359.4 513.2L1359.9 487.9L1360.4 515.8L1360.9 488.8L1361.4 516.5L1361.9 485.5L1362.4 519.4L1362.9 488.1L1363.4 516.8L1363.9 485.6L1364.3 501.6L1364.7 333.5L1365.2 333.5L1365.6 501.6L1364.4 515.8L1364.9 487.8L1365.4 519.7L1365.9 484.7L1366.4 514.4L1366.9 491.1L1367.4 520.3L1367.9 485.9L1368.4 515.9L1368.9 482.9L1369.4 516.2L1369.9 484.8L1370.4 516.6L1370.9 486.0L1371.4 518.6L1371.9 488.4L1372.4 519.5L1372.9 490.8L1373.4 518.1L1373.9 487.2L1374.2 501.7L1374.6 345.8L1375.1 345.8L1375.5 501.7L1374.4 509.8L1374.9 486.6L1375.4 516.0L1375.9 487.3L1376.4 516.8L1376.9 487.5L1377.4 513.9L1377.9 484.5L1378.4 517.8L1378.9 488.8L1379.4 511.2L1379.9 487.9L1380.4 521.2L1380.9 490.7L1381.4 514.4L1381.9 487.5L1382.4 517.5L1382.9 486.1L1383.1 501.7L1383.5 337.2L1384.0 337.2L1384.4 501.7L1383.4 514.2L1383.9 486.9L1384.4 529.6L1384.9 489.3L1385.4 519.4L1385.9 486.9L1386.4 515.8L1386.9 488.0L1387.4 514.5L1387.9 487.1L1388.4 519.8L1388.9 483.4L1389.4 515.1L1389.9 484.9L1390.4 517.1L1390.9 489.1L1391.3 501.8L1391.7 342.1L1392.2 342.1L1392.6 501.8L1391.4 516.8L1391.9 485.0L1392.4 518.9L1392.9 486.6L1393.4 516.9L1393.9 486.7L1394.4 513.4L1394.9 486.1L1395.4 517.3L1395.9 490.6L1396.4 517.4L1396.9 483.5L1397.4 516.9L1397.9 488.6L1398.4 525.5L1398.8 501.9L1399.2 341.8L1399.7 341.8L1400.1 501.9L1398.9 482.4L1399.4 513.2L1399.9 485.7L1400.4 518.9L1400.9 488.4L1401.4 514.5L1401.9 488.0L1402.4 518.7L1402.9 485.3L1403.4 520.1L1403.9 486.6L1404.4 519.3L1404.9 488.5L1405.4 519.4L1405.8 501.9L1406.2 341.8L1406.7 341.8L1407.1 501.9L1405.9 488.7L1406.4 514.6L1406.9 487.4L1407.4 521.2L1407.9 485.1L1408.4 515.8L1408.9 488.8L1409.4 514.4L1409.9 484.4L1410.4 518.5L1410.9 486.5L1411.4 516.2L1411.9 485.3L1412.3 502.0L1412.7 345.8L1413.2 345.8L1413.6 502.0L1412.4 517.3L1412.9 487.1L1413.4 514.4L1413.9 486.7L1414.4 514.4L1414.9 490.8L1415.4 518.1L1415.9 482.8L1416.4 516.6L1416.9 486.9L1417.4 516.3L1417.9 486.4L1418.3 502.0L1418.7 340.9L1419.2 340.9L1419.6 502.0L1418.4 518.6L1418.9 486.3L1419.4 519.1L1419.9 484.6L1420.4 514.5L1420.9 486.5L1421.4 517.2L1421.9 485.9L1422.4 519.9L1422.9 488.0L1423.4 521.2L1423.9 486.1L1424.0 502.1L1424.4 349.5L1424.9 349.5L1425.3 502.1L1424.4 518.7L1424.9 484.6L1425.4 520.4L1425.9 486.3L1426.4 517.1L1426.9 489.5L1427.4 517.1L1427.9 486.5L1428.4 519.9L1428.9 486.5L1429.4 516.2L1429.4 502.1L1429.8 338.4L1430.3 338.4L1430.7 502.1L1429.9 486.3L1430.4 515.3L1430.9 486.2L1431.4 521.5L1431.9 488.7L1432.4 513.5L1432.9 490.4L1433.4 516.2L1433.9 487.8L1434.4 522.5L1434.5 502.2L1434.9 355.8L1435.4 355.8L1435.8 502.2L1434.9 487.8L1435.4 516.6L1435.9 489.6L1436.4 517.9L1436.9 488.5L1437.4 515.1L1437.9 484.8L1438.4 519.1L1438.9 485.5" stroke="#3c5fa5" stroke-width="2.2" fill="none" stroke-linejoin="round"/>
<path d="M790.5 476.3L792.1 485.4L793.7 489.8L795.3 491.0L796.9 487.3L798.5 482.3L800.1 482.0L801.7 483.4L803.3 492.0L804.9 490.3L806.5 487.5L808.1 493.0L809.7 486.1L811.3 487.0L812.9 492.8L814.5 493.2L816.1 497.6L817.7 492.0L819.3 491.5L820.9 491.8L822.5 488.4L824.1 490.4L825.7 485.2L827.3 484.8L828.9 487.6L830.5 483.3L832.1 483.6L833.7 490.4L835.3 487.3L836.9 494.0L838.5 500.8L840.1 498.0L841.7 487.2L843.3 476.1L844.9 472.1L846.5 476.6L848.1 476.8L849.7 491.2L851.3 489.4L852.9 492.5L854.5 489.5L856.1 486.6L857.7 476.3L859.3 485.0L860.9 488.4L862.5 488.2L864.1 487.6L865.7 482.4L867.3 489.4L868.9 480.2L870.5 484.6L872.1 489.8L873.7 490.7L875.3 491.7L876.6 489.5L877.0 456.5L877.5 456.5L877.9 489.5L876.9 488.9L878.5 493.8L880.1 485.9L881.7 482.1L883.3 482.2L884.9 487.0L886.5 492.1L888.1 491.9L889.3 494.9L890.5 483.9L891.7 479.8L892.8 485.9L894.0 478.7L895.1 481.7L896.3 488.4L897.4 485.5L898.5 487.1L899.7 490.6L900.8 484.6L901.9 486.3L902.9 487.6L904.0 486.7L905.1 489.6L906.1 493.8L907.2 476.8L908.2 488.7L909.3 496.9L910.3 493.5L911.3 486.5L912.3 487.4L913.3 482.6L914.3 493.3L915.3 484.3L916.3 490.3L917.3 477.7L918.2 481.1L919.2 478.1L920.1 474.7L921.1 491.1L922.0 483.1L922.9 478.1L923.8 489.6L924.7 496.0L925.6 489.3L926.5 484.1L927.4 499.4L928.3 493.9L929.2 493.2L930.0 486.9L930.9 491.5L931.7 495.5L932.6 496.3L933.4 497.2L934.3 483.2L935.1 492.5L935.9 476.0L936.7 480.3L937.5 481.2L938.3 479.6L939.1 484.5L939.9 492.4L940.7 490.7L941.4 492.2L941.7 489.7L942.1 463.9L942.6 463.9L943.0 489.7L942.2 482.5L943.0 491.9L943.7 486.7L944.5 492.6L945.2 488.2L945.9 479.6L946.7 488.7L947.4 502.0L948.1 502.5L948.8 494.4L949.5 489.0L950.2 483.3L950.9 487.7L951.6 499.0L952.3 510.2L953.0 479.6L953.7 469.8L954.3 498.2L955.0 488.0L955.6 497.5L956.3 511.0L956.9 483.8L957.6 487.3L958.2 480.8L958.8 499.1L959.5 507.1L960.1 484.9L960.7 495.7L961.3 479.3L961.9 485.5L962.5 499.1L963.1 479.2L963.7 473.8L964.3 487.4L964.9 468.9L965.5 484.7L966.0 489.6L966.6 483.4L967.2 487.5L967.7 490.2L968.3 490.6L968.8 496.7L969.4 501.4L969.9 486.3L970.4 497.9L971.0 492.1L971.5 470.9L972.0 474.2L972.5 490.8L973.0 487.2L973.6 497.4L974.1 483.6L974.6 510.7L975.3 500.3L976.0 496.5L976.7 481.3L977.4 496.1L978.1 482.7L978.8 499.1L979.5 482.8L979.7 490.2L980.1 473.6L980.6 473.6L981.0 490.2L980.2 498.4L980.9 494.5L981.6 515.1L982.3 484.7L983.0 498.7L983.7 483.9L984.4 498.1L985.1 482.6L985.8 501.3L986.5 476.4L987.2 501.9L987.9 491.8L988.6 496.8L989.3 481.1L990.0 487.1L990.7 475.1L991.4 499.2L992.1 484.7L992.8 493.3L993.5 481.1L994.2 496.5L994.9 480.9L995.6 502.3L996.3 480.4L997.0 501.5L997.7 479.6L998.4 502.6L999.1 479.9L999.8 501.8L1000.5 480.6L1001.2 497.9L1001.9 479.9L1002.6 493.7L1003.3 477.1L1004.0 494.1L1004.7 481.6L1005.4 498.8L1006.1 488.3L1006.8 490.4L1007.2 463.6L1007.7 463.6L1008.1 490.4L1006.8 501.0L1007.5 481.9L1008.2 504.3L1008.9 475.2L1009.6 487.2L1010.3 489.6L1011.0 486.0L1011.7 482.9L1012.4 508.1L1013.1 482.8L1013.8 497.3L1014.5 480.2L1015.2 501.5L1015.9 480.7L1016.6 480.6L1017.3 476.9L1018.0 499.3L1018.7 483.5L1019.4 499.1L1020.1 482.4L1020.8 498.4L1021.5 478.0L1022.2 498.2L1022.9 478.4L1023.6 490.9L1024.3 481.5L1025.0 503.6L1025.7 487.3L1026.4 502.9L1027.1 483.9L1027.8 504.4L1028.5 479.7L1029.2 496.6L1029.9 482.4L1030.6 496.4L1031.3 480.9L1032.0 499.8L1032.7 482.0L1033.4 500.0L1034.1 495.6L1034.8 502.0L1035.5 481.1L1036.2 493.4L1036.9 467.5L1037.6 504.7L1038.3 481.8L1039.0 501.1L1039.7 491.6L1040.4 471.5L1041.1 481.9L1041.8 511.2L1042.5 479.9L1043.2 499.4L1043.9 476.6L1044.6 500.7L1044.8 490.9L1045.2 463.0L1045.7 463.0L1046.1 490.9L1045.3 480.5L1046.0 501.8L1046.7 478.3L1047.4 501.1L1048.1 480.0L1048.8 503.6L1049.5 479.4L1050.2 501.3L1050.9 481.4L1051.6 502.5L1052.3 481.0L1053.0 509.6L1053.7 479.6L1054.4 493.1L1055.1 480.6L1055.8 503.3L1056.5 481.1L1057.2 504.1L1057.9 481.4L1058.6 500.6L1059.3 482.1L1060.0 499.3L1060.7 492.3L1061.4 502.4L1062.1 477.8L1062.8 499.9L1063.5 480.5L1064.2 503.9L1064.9 478.1L1065.6 501.5L1066.3 482.2L1067.0 504.0L1067.7 479.0L1068.4 499.1L1069.1 479.8L1069.8 502.6L1070.5 480.0L1071.2 503.8L1071.9 481.4L1071.9 490.6L1072.3 470.8L1072.8 470.8L1073.2 490.6L1072.4 478.1L1072.9 478.9L1073.4 502.1L1073.9 481.0L1074.4 502.4L1074.9 482.4L1075.4 500.7L1075.9 483.0L1076.4 491.5L1076.9 481.2L1077.4 499.2L1077.9 477.7L1078.4 500.7L1078.9 466.7L1079.4 497.5L1079.9 492.9L1080.4 501.1L1080.9 477.5L1081.4 500.0L1081.9 479.5L1082.4 503.7L1082.9 476.3L1083.4 500.6L1083.9 478.7L1084.4 512.1L1084.9 477.2L1085.4 501.0L1085.9 478.7L1086.4 500.7L1086.9 480.6L1087.4 503.2L1087.9 479.1L1088.4 502.2L1088.9 476.9L1089.4 504.3L1089.9 474.9L1090.4 501.0L1090.9 479.3L1091.4 500.2L1091.9 477.3L1092.4 500.4L1092.8 489.4L1093.2 476.5L1093.7 476.5L1094.1 489.4L1092.9 481.9L1093.4 512.5L1093.9 478.7L1094.4 500.9L1094.9 482.3L1095.4 502.5L1095.9 477.4L1096.4 503.8L1096.9 476.2L1097.4 489.5L1097.9 474.3L1098.4 501.2L1098.9 476.2L1099.4 509.6L1099.9 479.8L1100.4 512.4L1100.9 477.4L1101.4 498.6L1101.9 477.7L1102.4 496.6L1102.9 478.1L1103.4 503.1L1103.9 474.7L1104.4 500.7L1104.9 476.7L1105.4 498.5L1105.9 476.7L1106.4 502.0L1106.9 476.0L1107.4 497.5L1107.9 473.1L1108.4 503.2L1108.9 474.8L1109.4 493.6L1109.9 478.9L1110.4 502.8L1110.9 476.8L1111.4 499.3L1111.9 477.6L1112.4 497.9L1112.9 476.5L1113.4 496.8L1113.9 474.3L1114.4 496.8L1114.9 471.4L1115.4 499.8L1115.9 474.2L1116.4 499.4L1116.9 474.8L1117.4 493.9L1117.9 477.8L1118.4 496.2L1118.9 475.3L1119.4 495.1L1119.9 471.0L1120.4 496.7L1120.9 476.8L1121.4 496.7L1121.9 475.1L1122.4 497.8L1122.9 472.6L1123.4 499.3L1123.9 472.0L1124.4 493.8L1124.9 468.5L1125.4 495.5L1125.9 470.4L1126.4 496.6L1126.9 472.7L1127.4 497.5L1127.9 472.2L1128.4 495.2L1128.9 471.1L1129.4 495.9L1129.9 466.9L1130.4 497.4L1130.9 471.5L1131.4 495.1L1131.9 468.2L1132.4 492.3L1132.9 468.4L1133.4 503.1L1133.9 468.4L1134.4 498.0L1134.9 469.1L1135.4 491.5L1135.9 468.8L1136.4 489.6L1136.9 466.7L1137.4 491.6L1137.9 461.5L1138.4 494.2L1138.9 465.2L1139.4 493.6L1139.9 466.4L1140.4 492.1L1140.9 465.2L1141.4 490.1L1141.9 463.9L1142.4 490.0L1142.9 461.0L1143.4 489.8L1143.9 459.6L1144.4 488.6L1144.9 463.0L1145.4 487.0L1145.9 459.7L1146.4 487.1L1146.9 459.0L1147.4 484.9L1147.9 453.8L1148.4 486.5L1148.9 453.2L1149.4 484.9L1149.9 455.1L1150.4 482.3L1150.9 454.6L1151.4 478.3L1151.9 450.5L1152.4 485.8L1152.9 446.2L1153.4 475.5L1153.9 443.7L1154.4 467.5L1154.9 441.0L1155.4 465.4L1155.9 435.2L1156.4 456.1L1156.9 424.5L1157.2 439.3L1157.7 385.0L1158.0 236.2L1158.2 64.7L1158.9 64.7L1159.0 236.2L1159.3 385.0L1159.8 439.3L1157.4 454.2L1157.9 420.8L1158.4 453.9L1158.9 420.6L1159.4 453.8L1159.9 432.6L1160.4 459.5L1160.9 441.1L1161.4 466.9L1161.9 440.5L1162.4 470.7L1162.9 444.3L1163.4 477.1L1163.9 448.3L1164.4 479.7L1164.9 451.3L1165.4 481.9L1165.9 456.4L1166.4 482.3L1166.9 459.7L1167.4 484.8L1167.9 455.3L1168.4 486.3L1168.9 457.7L1169.4 488.6L1169.9 462.0L1170.4 485.9L1170.9 459.4L1171.4 489.0L1171.9 459.8L1172.4 495.2L1172.9 465.3L1173.4 492.1L1173.9 471.1L1174.4 493.2L1174.9 468.5L1175.4 491.0L1175.9 466.2L1176.4 494.6L1176.9 465.2L1177.4 493.3L1177.9 468.4L1178.4 494.0L1178.9 470.6L1179.4 496.3L1179.9 468.9L1180.4 494.1L1180.9 470.8L1181.4 496.3L1181.9 471.1L1182.4 492.9L1182.9 473.3L1183.4 499.2L1183.9 464.3L1184.4 501.3L1184.9 472.3L1185.4 502.2L1185.9 469.7L1186.4 502.9L1186.9 473.6L1187.4 497.9L1187.9 474.8L1188.4 501.9L1188.9 476.7L1189.4 504.8L1189.9 476.2L1190.4 501.9L1190.9 475.7L1191.4 500.2L1191.9 476.2L1192.4 506.7L1192.9 478.9L1193.4 505.5L1193.9 477.9L1194.4 503.8L1194.9 479.6L1195.4 505.0L1195.9 476.8L1196.4 504.4L1196.9 478.7L1197.4 505.4L1197.9 478.3L1198.4 506.6L1198.9 479.3L1199.4 506.6L1199.9 478.2L1200.4 504.5L1200.9 481.0L1201.4 504.5L1201.9 481.9L1202.4 508.5L1202.9 481.2L1203.4 506.7L1203.9 483.4L1204.4 516.5L1204.9 482.6L1205.4 506.7L1205.9 482.4L1206.4 505.5L1206.9 483.2L1207.4 510.6L1207.9 483.9L1208.4 509.5L1208.9 483.9L1209.4 505.9L1209.9 483.8L1210.4 506.9L1210.9 483.2L1211.4 507.8L1211.9 483.9L1212.4 508.1L1212.9 487.3L1213.4 511.3L1213.9 483.1L1214.4 509.6L1214.9 482.4L1215.4 510.1L1215.9 486.9L1216.4 510.6L1216.9 483.7L1217.4 511.1L1217.9 487.9L1218.4 507.8L1218.9 484.9L1219.4 510.1L1219.9 484.1L1220.4 510.6L1220.9 482.4L1221.4 510.0L1221.9 482.4L1222.4 507.6L1222.9 488.1L1223.0 497.8L1223.4 337.2L1223.9 337.2L1224.3 497.8L1223.4 515.2L1223.9 486.5L1224.4 512.3L1224.9 486.6L1225.4 510.3L1225.9 483.2L1226.4 511.2L1226.9 485.2L1227.4 524.6L1227.9 489.2L1228.4 511.5L1228.9 488.3L1229.4 511.9L1229.9 485.4L1230.4 510.9L1230.9 483.8L1231.4 512.0L1231.9 487.7L1232.4 513.2L1232.9 485.5L1233.4 510.2L1233.9 487.5L1234.4 512.7L1234.9 483.0L1235.4 511.9L1235.9 487.6L1236.4 511.1L1236.9 485.1L1237.4 514.7L1237.9 483.8L1238.4 508.9L1238.9 484.1L1239.4 512.6L1239.9 485.2L1240.4 520.7L1240.9 484.1L1241.4 512.1L1241.9 487.1L1242.4 514.4L1242.9 487.2L1243.4 530.9L1243.9 483.7L1244.4 515.0L1244.9 485.0L1245.4 511.2L1245.9 486.3L1246.4 512.5L1246.9 488.5L1247.4 514.5L1247.9 486.8L1248.4 512.5L1248.9 483.4L1249.4 513.0L1249.9 486.7L1250.4 512.3L1250.9 484.5L1251.4 514.4L1251.9 484.2L1252.4 511.1L1252.9 486.5L1253.4 510.5L1253.9 487.1L1254.4 513.4L1254.9 483.1L1255.4 509.8L1255.9 488.7L1256.4 515.5L1256.9 488.0L1257.4 514.0L1257.9 482.3L1258.4 517.1L1258.9 488.0L1259.4 514.8L1259.9 485.4L1260.4 514.6L1260.9 484.4L1261.1 499.8L1261.5 338.4L1262.0 338.4L1262.4 499.8L1261.4 512.3L1261.9 487.0L1262.4 514.0L1262.9 487.7L1263.4 512.6L1263.9 485.4L1264.4 513.2L1264.9 489.6L1265.4 511.2L1265.9 482.1L1266.4 514.8L1266.9 488.1L1267.4 512.4L1267.9 487.3L1268.4 513.8L1268.9 486.7L1269.4 515.0L1269.9 488.6L1270.4 515.4L1270.9 485.2L1271.4 514.1L1271.9 487.2L1272.4 516.6L1272.9 486.4L1273.4 511.2L1273.9 485.6L1274.4 511.8L1274.9 483.4L1275.4 514.1L1275.9 484.1L1276.4 510.6L1276.9 486.3L1277.4 512.1L1277.9 484.8L1278.4 512.6L1278.9 487.8L1279.4 511.2L1279.9 483.1L1280.4 510.9L1280.9 487.1L1281.4 515.7L1281.9 483.1L1282.4 517.6L1282.9 490.0L1283.4 513.0L1283.9 492.4L1284.4 513.3L1284.9 487.2L1285.4 516.0L1285.9 483.9L1286.4 514.9L1286.9 482.0L1287.4 516.1L1287.9 486.0L1288.1 500.5L1288.5 356.4L1289.0 356.4L1289.4 500.5L1288.4 516.8L1288.9 489.7L1289.4 515.1L1289.9 486.9L1290.4 511.9L1290.9 486.8L1291.4 514.3L1291.9 487.7L1292.4 516.9L1292.9 488.1L1293.4 515.4L1293.9 488.3L1294.4 514.6L1294.9 486.8L1295.4 516.3L1295.9 486.1L1296.4 518.3L1296.9 484.0L1297.4 512.4L1297.9 486.0L1298.4 515.0L1298.9 485.8L1299.4 520.4L1299.9 482.8L1300.4 515.9L1300.9 486.6L1301.4 514.0L1301.9 474.3L1302.4 514.5L1302.9 487.0L1303.4 515.4L1303.9 487.1L1304.4 516.7L1304.9 488.4L1305.4 515.8L1305.9 488.9L1306.4 517.3L1306.9 485.0L1307.4 515.9L1307.9 487.5L1308.4 518.8L1308.9 488.8L1309.1 501.1L1309.5 336.9L1310.0 336.9L1310.4 501.1L1309.4 514.1L1309.9 488.8L1310.4 514.9L1310.9 487.8L1311.4 516.2L1311.9 484.6L1312.4 515.9L1312.9 484.6L1313.4 516.9L1313.9 488.2L1314.4 517.8L1314.9 488.2L1315.4 517.0L1315.9 486.3L1316.4 514.9L1316.9 485.5L1317.4 511.2L1317.9 489.9L1318.4 518.0L1318.9 488.7L1319.4 517.7L1319.9 489.1L1320.4 515.9L1320.9 486.5L1321.4 514.7L1321.9 489.2L1322.4 514.9L1322.9 484.1L1323.4 510.4L1323.9 489.2L1324.4 512.7L1324.9 481.1L1325.4 517.8L1325.9 486.8L1326.2 501.2L1326.6 359.2L1327.1 359.2L1327.5 501.2L1326.4 515.3L1326.9 489.3L1327.4 514.3L1327.9 488.9L1328.4 515.8L1328.9 490.4L1329.4 513.6L1329.9 480.5L1330.4 511.6L1330.9 486.2L1331.4 511.0L1331.9 484.5L1332.4 515.5L1332.9 486.7L1333.4 513.1L1333.9 485.2L1334.4 516.6L1334.9 486.9L1335.4 513.2L1335.9 489.7L1336.4 517.3L1336.9 482.7L1337.4 514.5L1337.9 489.6L1338.4 519.4L1338.9 484.2L1339.4 516.3L1339.9 483.8L1340.4 517.5L1340.7 501.4L1341.1 335.8L1341.6 335.8L1342.0 501.4L1340.9 485.8L1341.4 515.9L1341.9 486.3L1342.4 511.9L1342.9 487.9L1343.4 512.9L1343.9 488.6L1344.4 516.1L1344.9 487.1L1345.4 515.2L1345.9 485.8L1346.4 516.1L1346.9 488.7L1347.4 515.9L1347.9 485.5L1348.4 515.3L1348.9 488.5L1349.4 516.2L1349.9 490.3L1350.4 514.9L1350.9 484.4L1351.4 513.9L1351.9 489.0L1352.4 513.4L1352.9 485.8L1353.2 501.5L1353.6 354.1L1354.1 354.1L1354.5 501.5L1353.4 515.9L1353.9 485.0L1354.4 518.9L1354.9 488.2L1355.4 518.1L1355.9 488.7L1356.4 517.2L1356.9 481.7L1357.4 514.6L1357.9 485.6L1358.4 518.8L1358.9 486.1L1359.4 517.1L1359.9 487.0L1360.4 514.8L1360.9 486.0L1361.4 516.3L1361.9 483.6L1362.4 520.9L1362.9 488.6L1363.4 520.4L1363.9 488.9L1364.3 501.6L1364.7 337.8L1365.2 337.8L1365.6 501.6L1364.4 518.4L1364.9 487.1L1365.4 516.9L1365.9 484.6L1366.4 516.3L1366.9 483.9L1367.4 517.0L1367.9 485.4L1368.4 515.8L1368.9 486.9L1369.4 516.5L1369.9 488.8L1370.4 518.1L1370.9 484.3L1371.4 517.0L1371.9 482.8L1372.4 515.3L1372.9 485.0L1373.4 520.7L1373.9 487.7L1374.2 501.7L1374.6 349.2L1375.1 349.2L1375.5 501.7L1374.4 517.3L1374.9 487.6L1375.4 520.0L1375.9 489.0L1376.4 515.3L1376.9 487.5L1377.4 515.0L1377.9 486.3L1378.4 517.3L1378.9 483.8L1379.4 533.5L1379.9 488.5L1380.4 512.0L1380.9 486.8L1381.4 519.9L1381.9 487.2L1382.4 518.7L1382.9 488.6L1383.1 501.7L1383.5 340.1L1384.0 340.1L1384.4 501.7L1383.4 517.8L1383.9 486.7L1384.4 519.0L1384.9 487.6L1385.4 517.2L1385.9 487.0L1386.4 518.9L1386.9 486.6L1387.4 517.3L1387.9 483.5L1388.4 520.2L1388.9 488.4L1389.4 525.3L1389.9 483.8L1390.4 515.1L1390.9 485.8L1391.3 501.8L1391.7 345.8L1392.2 345.8L1392.6 501.8L1391.4 516.6L1391.9 484.0L1392.4 516.4L1392.9 483.9L1393.4 517.3L1393.9 489.2L1394.4 516.9L1394.9 488.1L1395.4 522.3L1395.9 486.0L1396.4 518.4L1396.9 487.4L1397.4 519.6L1397.9 486.3L1398.4 517.0L1398.8 501.9L1399.2 345.5L1399.7 345.5L1400.1 501.9L1398.9 488.7L1399.4 513.0L1399.9 489.8L1400.4 515.8L1400.9 488.3L1401.4 516.6L1401.9 488.3L1402.4 521.7L1402.9 485.7L1403.4 520.0L1403.9 487.2L1404.4 515.4L1404.9 488.3L1405.4 514.2L1405.8 501.9L1406.2 345.5L1406.7 345.5L1407.1 501.9L1405.9 485.8L1406.4 518.4L1406.9 488.8L1407.4 516.2L1407.9 487.0L1408.4 516.4L1408.9 488.2L1409.4 516.9L1409.9 487.1L1410.4 520.3L1410.9 488.6L1411.4 515.8L1411.9 486.3L1412.3 502.0L1412.7 349.2L1413.2 349.2L1413.6 502.0L1412.4 517.7L1412.9 486.5L1413.4 515.1L1413.9 489.3L1414.4 517.0L1414.9 485.9L1415.4 518.1L1415.9 487.7L1416.4 518.5L1416.9 487.3L1417.4 516.5L1417.9 485.5L1418.3 502.0L1418.7 344.9L1419.2 344.9L1419.6 502.0L1418.4 518.1L1418.9 486.7L1419.4 517.7L1419.9 485.3L1420.4 521.0L1420.9 486.9L1421.4 518.3L1421.9 484.6L1422.4 514.2L1422.9 483.7L1423.4 514.2L1423.9 485.5L1424.0 502.1L1424.4 352.9L1424.9 352.9L1425.3 502.1L1424.4 517.1L1424.9 486.5L1425.4 519.7L1425.9 486.4L1426.4 520.7L1426.9 483.8L1427.4 517.8L1427.9 489.5L1428.4 519.6L1428.9 491.5L1429.4 517.4L1429.4 502.1L1429.8 343.2L1430.3 343.2L1430.7 502.1L1429.9 490.1L1430.4 519.1L1430.9 487.3L1431.4 513.5L1431.9 488.4L1432.4 518.7L1432.9 488.7L1433.4 516.5L1433.9 485.7L1434.4 520.1L1434.5 502.2L1434.9 359.2L1435.4 359.2L1435.8 502.2L1434.9 492.3L1435.4 516.0L1435.9 487.0L1436.4 517.2L1436.9 488.9L1437.4 514.6L1437.9 489.5L1438.4 515.8L1438.9 487.2" stroke="#c82328" stroke-width="2.2" fill="none" stroke-linejoin="round" stroke-opacity="0.75"/>
<rect x="790.5" y="47.5" width="649" height="496" stroke="#6b6b6b" stroke-width="1" fill="none"/>
</svg>
<div class="t" style="left:26.16px;top:537.41px;font-size:12px;line-height:12px;color:#1a1a1a;">-10</div>
<div class="t" style="left:32.83px;top:512.63px;font-size:12px;line-height:12px;color:#1a1a1a;">-9</div>
<div class="t" style="left:32.83px;top:487.84px;font-size:12px;line-height:12px;color:#1a1a1a;">-8</div>
<div class="t" style="left:32.83px;top:463.06px;font-size:12px;line-height:12px;color:#1a1a1a;">-7</div>
<div class="t" style="left:32.83px;top:438.27px;font-size:12px;line-height:12px;color:#1a1a1a;">-6</div>
<div class="t" style="left:32.83px;top:413.49px;font-size:12px;line-height:12px;color:#1a1a1a;">-5</div>
<div class="t" style="left:32.83px;top:388.70px;font-size:12px;line-height:12px;color:#1a1a1a;">-4</div>
<div class="t" style="left:32.83px;top:363.92px;font-size:12px;line-height:12px;color:#1a1a1a;">-3</div>
<div class="t" style="left:32.83px;top:339.13px;font-size:12px;line-height:12px;color:#1a1a1a;">-2</div>
<div class="t" style="left:32.83px;top:314.35px;font-size:12px;line-height:12px;color:#1a1a1a;">-1</div>
<div class="t" style="left:36.83px;top:289.56px;font-size:12px;line-height:12px;color:#1a1a1a;">0</div>
<div class="t" style="left:36.83px;top:264.78px;font-size:12px;line-height:12px;color:#1a1a1a;">1</div>
<div class="t" style="left:36.83px;top:239.99px;font-size:12px;line-height:12px;color:#1a1a1a;">2</div>
<div class="t" style="left:36.83px;top:215.21px;font-size:12px;line-height:12px;color:#1a1a1a;">3</div>
<div class="t" style="left:36.83px;top:190.42px;font-size:12px;line-height:12px;color:#1a1a1a;">4</div>
<div class="t" style="left:36.83px;top:165.64px;font-size:12px;line-height:12px;color:#1a1a1a;">5</div>
<div class="t" style="left:36.83px;top:140.85px;font-size:12px;line-height:12px;color:#1a1a1a;">6</div>
<div class="t" style="left:36.83px;top:116.07px;font-size:12px;line-height:12px;color:#1a1a1a;">7</div>
<div class="t" style="left:36.83px;top:91.28px;font-size:12px;line-height:12px;color:#1a1a1a;">8</div>
<div class="t" style="left:36.83px;top:66.50px;font-size:12px;line-height:12px;color:#1a1a1a;">9</div>
<div class="t" style="left:30.15px;top:41.71px;font-size:12px;line-height:12px;color:#1a1a1a;">10</div>
<div class="t" style="left:44.16px;top:548.04px;font-size:12px;line-height:12px;color:#1a1a1a;">0</div>
<div class="t" style="left:77.83px;top:548.04px;font-size:12px;line-height:12px;color:#1a1a1a;">200u</div>
<div class="t" style="left:121.50px;top:548.04px;font-size:12px;line-height:12px;color:#1a1a1a;">400u</div>
<div class="t" style="left:165.17px;top:548.04px;font-size:12px;line-height:12px;color:#1a1a1a;">600u</div>
<div class="t" style="left:208.85px;top:548.04px;font-size:12px;line-height:12px;color:#1a1a1a;">800u</div>
<div class="t" style="left:252.53px;top:548.04px;font-size:12px;line-height:12px;color:#1a1a1a;">1.0m</div>
<div class="t" style="left:296.20px;top:548.04px;font-size:12px;line-height:12px;color:#1a1a1a;">1.2m</div>
<div class="t" style="left:339.87px;top:548.04px;font-size:12px;line-height:12px;color:#1a1a1a;">1.4m</div>
<div class="t" style="left:383.55px;top:548.04px;font-size:12px;line-height:12px;color:#1a1a1a;">1.6m</div>
<div class="t" style="left:427.22px;top:548.04px;font-size:12px;line-height:12px;color:#1a1a1a;">1.8m</div>
<div class="t" style="left:470.89px;top:548.04px;font-size:12px;line-height:12px;color:#1a1a1a;">2.0m</div>
<div class="t" style="left:514.57px;top:548.04px;font-size:12px;line-height:12px;color:#1a1a1a;">2.2m</div>
<div class="t" style="left:558.24px;top:548.04px;font-size:12px;line-height:12px;color:#1a1a1a;">2.4m</div>
<div class="t" style="left:601.91px;top:548.04px;font-size:12px;line-height:12px;color:#1a1a1a;">2.6m</div>
<div class="t" style="left:645.59px;top:548.04px;font-size:12px;line-height:12px;color:#1a1a1a;">2.8m</div>
<div class="t" style="left:355.16px;top:559.79px;font-size:11.59px;line-height:11.59px;color:#1a1a1a;transform:scaleX(0.9398);transform-origin:0 0;">Time (s)</div>
<div class="t" style="left:358.69px;top:33.10px;font-size:12.76px;line-height:12.76px;color:#1a1a1a;transform:scaleX(0.8814);transform-origin:0 0;">Scope</div>
<div class="t" style="left:15.9px;top:294.7px;font-size:12px;line-height:12px;color:#1a1a1a;transform:translate(-50%,-50%) rotate(-90deg) scaleX(0.965)">Instantaneous Level (V)</div>
<div class="t" style="left:779.83px;top:58.79px;font-size:12px;line-height:12px;color:#1a1a1a;">0</div>
<div class="t" style="left:769.16px;top:87.39px;font-size:12px;line-height:12px;color:#1a1a1a;">-10</div>
<div class="t" style="left:769.16px;top:115.99px;font-size:12px;line-height:12px;color:#1a1a1a;">-20</div>
<div class="t" style="left:769.16px;top:144.59px;font-size:12px;line-height:12px;color:#1a1a1a;">-30</div>
<div class="t" style="left:769.16px;top:173.19px;font-size:12px;line-height:12px;color:#1a1a1a;">-40</div>
<div class="t" style="left:769.16px;top:201.79px;font-size:12px;line-height:12px;color:#1a1a1a;">-50</div>
<div class="t" style="left:769.16px;top:230.39px;font-size:12px;line-height:12px;color:#1a1a1a;">-60</div>
<div class="t" style="left:769.16px;top:258.99px;font-size:12px;line-height:12px;color:#1a1a1a;">-70</div>
<div class="t" style="left:769.16px;top:287.59px;font-size:12px;line-height:12px;color:#1a1a1a;">-80</div>
<div class="t" style="left:769.16px;top:316.19px;font-size:12px;line-height:12px;color:#1a1a1a;">-90</div>
<div class="t" style="left:762.48px;top:344.79px;font-size:12px;line-height:12px;color:#1a1a1a;">-100</div>
<div class="t" style="left:763.37px;top:373.39px;font-size:12px;line-height:12px;color:#1a1a1a;">-110</div>
<div class="t" style="left:762.48px;top:401.99px;font-size:12px;line-height:12px;color:#1a1a1a;">-120</div>
<div class="t" style="left:762.48px;top:430.59px;font-size:12px;line-height:12px;color:#1a1a1a;">-130</div>
<div class="t" style="left:762.48px;top:459.19px;font-size:12px;line-height:12px;color:#1a1a1a;">-140</div>
<div class="t" style="left:762.48px;top:487.79px;font-size:12px;line-height:12px;color:#1a1a1a;">-150</div>
<div class="t" style="left:762.48px;top:516.39px;font-size:12px;line-height:12px;color:#1a1a1a;">-160</div>
<div class="t" style="left:783.83px;top:548.04px;font-size:12px;line-height:12px;color:#1a1a1a;">20</div>
<div class="t" style="left:821.91px;top:548.04px;font-size:12px;line-height:12px;color:#1a1a1a;">30</div>
<div class="t" style="left:869.89px;top:548.04px;font-size:12px;line-height:12px;color:#1a1a1a;">50</div>
<div class="t" style="left:931.65px;top:548.04px;font-size:12px;line-height:12px;color:#1a1a1a;">100</div>
<div class="t" style="left:996.76px;top:548.04px;font-size:12px;line-height:12px;color:#1a1a1a;">200</div>
<div class="t" style="left:1034.84px;top:548.04px;font-size:12px;line-height:12px;color:#1a1a1a;">300</div>
<div class="t" style="left:1082.82px;top:548.04px;font-size:12px;line-height:12px;color:#1a1a1a;">500</div>
<div class="t" style="left:1151.59px;top:548.04px;font-size:12px;line-height:12px;color:#1a1a1a;">1k</div>
<div class="t" style="left:1216.70px;top:548.04px;font-size:12px;line-height:12px;color:#1a1a1a;">2k</div>
<div class="t" style="left:1254.78px;top:548.04px;font-size:12px;line-height:12px;color:#1a1a1a;">3k</div>
<div class="t" style="left:1302.76px;top:548.04px;font-size:12px;line-height:12px;color:#1a1a1a;">5k</div>
<div class="t" style="left:1364.52px;top:548.04px;font-size:12px;line-height:12px;color:#1a1a1a;">10k</div>
<div class="t" style="left:1429.63px;top:548.04px;font-size:12px;line-height:12px;color:#1a1a1a;">20k</div>
<div class="t" style="left:1073.64px;top:559.56px;font-size:11.86px;line-height:11.86px;color:#1a1a1a;transform:scaleX(0.9845);transform-origin:0 0;">Frequency (Hz)</div>
<div class="t" style="left:1103.84px;top:32.95px;font-size:12.87px;line-height:12.87px;color:#1a1a1a;transform:scaleX(0.9084);transform-origin:0 0;">FFT</div>
<div class="t" style="left:751.8px;top:294.9px;font-size:12px;line-height:12px;color:#1a1a1a;transform:translate(-50%,-50%) rotate(-90deg) scaleX(0.98)">Level (dBrA)</div>
<div class="t" style="left:6.54px;top:7.88px;font-size:14.91px;line-height:14.91px;font-weight:bold;color:#000;transform:scaleX(1.0388);transform-origin:0 0;">Scope</div>
<div class="t" style="left:62.00px;top:8.84px;font-size:12px;line-height:12px;color:#111;transform:scaleX(0.8114);transform-origin:0 0;">X:</div>
<div class="r" style="left:77px;top:4px;width:75px;height:23px;background:#fff;"></div><div class="r" style="left:140px;top:5px;width:11px;height:21px;background:#f8f8f8;"></div><svg style="left:142.5px;top:13.8px" width="5.4" height="3.2" viewBox="0 0 5.4 3.2"><polygon points="0,0 5.4,0 2.7,3.2" fill="#000"/></svg><div class="t" style="left:81.00px;top:9.64px;font-size:12px;line-height:12px;color:#111;">s</div>
<div class="t" style="left:155.80px;top:8.84px;font-size:12px;line-height:12px;color:#111;transform:scaleX(0.8805);transform-origin:0 0;">Y:</div>
<div class="r" style="left:171px;top:4px;width:75px;height:23px;background:#fff;"></div><div class="r" style="left:234px;top:5px;width:11px;height:21px;background:#f8f8f8;"></div><svg style="left:236.5px;top:13.8px" width="5.4" height="3.2" viewBox="0 0 5.4 3.2"><polygon points="0,0 5.4,0 2.7,3.2" fill="#000"/></svg><div class="t" style="left:174.80px;top:9.44px;font-size:12px;line-height:12px;color:#111;">V</div>
<svg style="left:250px;top:7px" width="16" height="16" viewBox="0 0 16 16"><rect width="16" height="16" fill="#253f50"/><polygon points="6.66,3.60 7.39,1.83 8.61,1.83 9.34,3.60 10.17,3.94 11.93,3.21 12.79,4.07 12.06,5.83 12.40,6.66 14.17,7.39 14.17,8.61 12.40,9.34 12.06,10.17 12.79,11.93 11.93,12.79 10.17,12.06 9.34,12.40 8.61,14.17 7.39,14.17 6.66,12.40 5.83,12.06 4.07,12.79 3.21,11.93 3.94,10.17 3.60,9.34 1.83,8.61 1.83,7.39 3.60,6.66 3.94,5.83 3.21,4.07 4.07,3.21 5.83,3.94" fill="#fff"/><circle cx="8" cy="8" r="2" fill="#2c3f66"/></svg>
<div class="r" style="left:706px;top:8px;width:1px;height:15px;background:#b8bcbe;"></div><div class="r" style="left:707px;top:8px;width:1px;height:15px;background:#fafcfc;"></div>
<svg style="left:714px;top:9px" width="12" height="12" viewBox="0 0 12 12"><path d="M0 0H3.8V2H2V10H10V8H12V12H0Z" fill="#1b3c82"/><path d="M5.5 0H12V6.5Z" fill="#1b3c82"/><path d="M5 7L9.5 2.5" stroke="#1b3c82" stroke-width="2" stroke-linecap="round"/></svg>
<div class="t" style="left:742.67px;top:7.53px;font-size:15.56px;line-height:15.56px;font-weight:bold;color:#000;transform:scaleX(0.8823);transform-origin:0 0;">FFT</div>
<div class="t" style="left:776.80px;top:8.84px;font-size:12px;line-height:12px;color:#111;transform:scaleX(0.8291);transform-origin:0 0;">X:</div>
<div class="r" style="left:792px;top:4px;width:75px;height:23px;background:#fff;"></div><div class="r" style="left:855px;top:5px;width:11px;height:21px;background:#f8f8f8;"></div><svg style="left:857.5px;top:13.8px" width="5.4" height="3.2" viewBox="0 0 5.4 3.2"><polygon points="0,0 5.4,0 2.7,3.2" fill="#000"/></svg><div class="t" style="left:796.40px;top:9.64px;font-size:12px;line-height:12px;color:#111;transform:scaleX(0.9341);transform-origin:0 0;">Hz</div>
<div class="t" style="left:871.00px;top:8.84px;font-size:12px;line-height:12px;color:#111;transform:scaleX(0.8992);transform-origin:0 0;">Y:</div>
<div class="r" style="left:886px;top:4px;width:75px;height:23px;background:#fff;"></div><div class="r" style="left:949px;top:5px;width:11px;height:21px;background:#f8f8f8;"></div><svg style="left:951.5px;top:13.8px" width="5.4" height="3.2" viewBox="0 0 5.4 3.2"><polygon points="0,0 5.4,0 2.7,3.2" fill="#000"/></svg><div class="t" style="left:890.40px;top:9.64px;font-size:12px;line-height:12px;color:#111;transform:scaleX(0.9633);transform-origin:0 0;">dBrA</div>
<svg style="left:965px;top:7px" width="16" height="16" viewBox="0 0 16 16"><rect width="16" height="16" fill="#253f50"/><polygon points="6.66,3.60 7.39,1.83 8.61,1.83 9.34,3.60 10.17,3.94 11.93,3.21 12.79,4.07 12.06,5.83 12.40,6.66 14.17,7.39 14.17,8.61 12.40,9.34 12.06,10.17 12.79,11.93 11.93,12.79 10.17,12.06 9.34,12.40 8.61,14.17 7.39,14.17 6.66,12.40 5.83,12.06 4.07,12.79 3.21,11.93 3.94,10.17 3.60,9.34 1.83,8.61 1.83,7.39 3.60,6.66 3.94,5.83 3.21,4.07 4.07,3.21 5.83,3.94" fill="#fff"/><circle cx="8" cy="8" r="2" fill="#2c3f66"/></svg>
<div class="r" style="left:1443px;top:8px;width:1px;height:15px;background:#b8bcbe;"></div><div class="r" style="left:1444px;top:8px;width:1px;height:15px;background:#fafcfc;"></div>
<svg style="left:1451px;top:9px" width="12" height="12" viewBox="0 0 12 12"><path d="M0 0H3.8V2H2V10H10V8H12V12H0Z" fill="#1b3c82"/><path d="M5.5 0H12V6.5Z" fill="#1b3c82"/><path d="M5 7L9.5 2.5" stroke="#1b3c82" stroke-width="2" stroke-linecap="round"/></svg>
<div class="t" style="left:17.00px;top:590.24px;font-size:12px;line-height:12px;color:#111;transform:scaleX(1.0043);transform-origin:0 0;">Interpolated:</div>
<svg style="left:99px;top:588px" width="15" height="15" viewBox="0 0 15 15"><circle cx="7.5" cy="7.5" r="6.6" fill="#0a5cc2"/><circle cx="7.5" cy="7.5" r="2.4" fill="#fff"/></svg>
<div class="t" style="left:119.50px;top:590.24px;font-size:12px;line-height:12px;color:#111;transform:scaleX(0.9370);transform-origin:0 0;">On</div>
<svg style="left:148px;top:588px" width="15" height="15" viewBox="0 0 15 15"><circle cx="7.5" cy="7.5" r="6.2" fill="none" stroke="#555" stroke-width="1"/></svg>
<div class="t" style="left:168.00px;top:590.24px;font-size:12px;line-height:12px;color:#111;transform:scaleX(1.0770);transform-origin:0 0;">Off</div>
<div class="t" style="left:206.00px;top:590.24px;font-size:12px;line-height:12px;color:#111;transform:scaleX(0.9355);transform-origin:0 0;">Show Residual:</div>
<div class="r" style="left:298px;top:583.5px;width:121px;height:22px;background:#fff;border:1px solid #d2d2d2;border-radius:2px"></div><div class="t" style="left:301.50px;top:590.24px;font-size:12px;line-height:12px;color:#111;transform:scaleX(1.0770);transform-origin:0 0;">Off</div><svg style="left:404px;top:592px" width="9" height="6" viewBox="0 0 9 6"><polyline points="0.5,0.5 4.5,4.5 8.5,0.5" stroke="#444" stroke-width="1" fill="none"/></svg>
<div class="t" style="left:431.00px;top:590.24px;font-size:12px;line-height:12px;color:#111;transform:scaleX(0.9492);transform-origin:0 0;">Show Cycles:</div>
<div class="r" style="left:512px;top:583px;width:70px;height:22.7px;background:#fff;border:1px solid #9a9ea3"></div><div class="t" style="left:514.30px;top:587.14px;font-size:12px;line-height:12px;color:#111;transform:scaleX(0.8391);transform-origin:0 0;">3</div><div class="r" style="left:566.5px;top:585.3px;width:13px;height:8.2px;background:#fafafa;border:1px solid #d2d2d2;border-radius:1px"></div><div class="r" style="left:566.5px;top:594.5px;width:13px;height:8.2px;background:#fafafa;border:1px solid #d2d2d2;border-radius:1px"></div><svg style="left:570px;top:588px" width="6" height="12" viewBox="0 0 6 12"><polygon points="0,3 3,0 6,3" fill="#111"/><polygon points="0,9 3,12 6,9" fill="#111"/></svg>
<div class="t" style="left:753.00px;top:590.24px;font-size:12px;line-height:12px;color:#111;transform:scaleX(0.9440);transform-origin:0 0;">FFT Length:</div>
<div class="r" style="left:828px;top:583.5px;width:60px;height:22px;background:#fff;border:1px solid #d2d2d2;border-radius:2px"></div><div class="t" style="left:830.80px;top:590.24px;font-size:12px;line-height:12px;color:#111;transform:scaleX(0.9277);transform-origin:0 0;">256K</div><svg style="left:873px;top:592px" width="9" height="6" viewBox="0 0 9 6"><polyline points="0.5,0.5 4.5,4.5 8.5,0.5" stroke="#444" stroke-width="1" fill="none"/></svg>
<div class="t" style="left:900.40px;top:590.24px;font-size:12px;line-height:12px;color:#111;">Window:</div>
<div class="r" style="left:959px;top:583.5px;width:181px;height:22px;background:#fff;border:1px solid #d2d2d2;border-radius:2px"></div><div class="t" style="left:963.30px;top:590.24px;font-size:12px;line-height:12px;color:#111;transform:scaleX(0.9949);transform-origin:0 0;">AP-Equiripple</div><svg style="left:1125px;top:592px" width="9" height="6" viewBox="0 0 9 6"><polyline points="0.5,0.5 4.5,4.5 8.5,0.5" stroke="#444" stroke-width="1" fill="none"/></svg>
<div class="t" style="left:1151.00px;top:590.24px;font-size:12px;line-height:12px;color:#111;transform:scaleX(0.9384);transform-origin:0 0;">Averages:</div>
<div class="r" style="left:1214px;top:583px;width:70px;height:22.7px;background:#fff;border:1px solid #9a9ea3"></div><div class="t" style="left:1216.30px;top:587.14px;font-size:12px;line-height:12px;color:#111;transform:scaleX(0.8391);transform-origin:0 0;">3</div><div class="r" style="left:1268.5px;top:585.3px;width:13px;height:8.2px;background:#fafafa;border:1px solid #d2d2d2;border-radius:1px"></div><div class="r" style="left:1268.5px;top:594.5px;width:13px;height:8.2px;background:#fafafa;border:1px solid #d2d2d2;border-radius:1px"></div><svg style="left:1272px;top:588px" width="6" height="12" viewBox="0 0 6 12"><polygon points="0,3 3,0 6,3" fill="#111"/><polygon points="0,9 3,12 6,9" fill="#111"/></svg>
<div class="r" style="left:1291px;top:588.5px;width:13px;height:13px;background:#fff;border:1px solid #333;border-radius:2px"></div>
<div class="t" style="left:1310.00px;top:590.24px;font-size:12px;line-height:12px;color:#111;transform:scaleX(0.9494);transform-origin:0 0;">Show Residual</div>
<div class="r" style="left:1400.5px;top:584.3px;width:21.5px;height:22.3px;background:#fcfcfc;border:1px solid #c9c9c9;border-right:none;border-radius:3px 0 0 3px"></div>
<div class="r" style="left:1429.6px;top:581.3px;width:31px;height:24.3px;background:#fcfcfc;border:1px solid #c9c9c9;border-radius:3px"></div>
<svg style="left:1436px;top:590px" width="16" height="8" viewBox="0 0 16 8"><polyline points="1,1 4.6,4 1,7" stroke="#111" stroke-width="1.3" fill="none"/><polyline points="9.2,1 12.8,4 9.2,7" stroke="#111" stroke-width="1.3" fill="none"/></svg>
<svg style="left:2px;top:635px" width="16" height="16" viewBox="0 0 16 16"><rect width="16" height="16" fill="#253f50"/><rect x="7" y="2" width="2" height="12" fill="#fff"/><rect x="2" y="7" width="12" height="2" fill="#fff"/></svg>
<div class="t" style="left:21.40px;top:636.84px;font-size:12px;line-height:12px;color:#111;">Add Meter</div>
<svg style="left:83.5px;top:642px" width="4.8" height="3" viewBox="0 0 4.8 3"><polygon points="0,0 4.8,0 2.4,3" fill="#000"/></svg>
<div class="r" style="left:96px;top:636px;width:1px;height:15px;background:#b8bcbe;"></div><div class="r" style="left:97px;top:636px;width:1px;height:15px;background:#fafcfc;"></div>
<svg style="left:100px;top:635px" width="16" height="16" viewBox="0 0 16 16"><rect width="16" height="16" fill="#253f50"/><ellipse cx="5" cy="3.6" rx="4.4" ry="1.9" fill="#fff"/><rect x="0.8" y="6.3" width="7" height="2.3" rx="1.1" fill="#fff"/><rect x="0.8" y="9.2" width="7" height="2.3" rx="1.1" fill="#fff"/><rect x="0.8" y="12" width="8.6" height="2.6" rx="1.2" fill="#fff"/><path d="M7.6 6.9H11.3V4.8L15.4 8.4L11.3 12V9.9H7.6Z" fill="#fff"/></svg>
<div class="t" style="left:119.00px;top:636.84px;font-size:12px;line-height:12px;color:#111;transform:scaleX(0.9329);transform-origin:0 0;">Save Meter Data</div>
<div class="r" style="left:214px;top:636px;width:1px;height:15px;background:#b8bcbe;"></div><div class="r" style="left:215px;top:636px;width:1px;height:15px;background:#fafcfc;"></div>
<svg style="left:218px;top:635px" width="16" height="16" viewBox="0 0 16 16"><rect width="16" height="16" fill="#253f50"/><polygon points="5,3.5 12,8 5,12.5" fill="#fff"/></svg>
<div class="t" style="left:237.00px;top:636.84px;font-size:12px;line-height:12px;color:#111;transform:scaleX(0.9576);transform-origin:0 0;">Regulate</div>
<svg style="left:1453px;top:638px" width="13" height="11" viewBox="0 0 13 11"><polygon points="4.5,0 8.5,0 8.5,3 11,3 6.5,7 2,3 4.5,3" fill="#2f5688"/><rect x="0" y="9" width="13" height="1.8" fill="#2f5688"/></svg>
<div class="t" style="left:5.94px;top:663.71px;font-size:15.59px;line-height:15.59px;font-weight:bold;color:#000;transform:scaleX(1.0041);transform-origin:0 0;">RMS Level</div>
<div class="r" style="left:92px;top:660px;width:75px;height:23px;background:#fff;"></div><div class="r" style="left:155px;top:661px;width:11px;height:21px;background:#f8f8f8;"></div><svg style="left:157.5px;top:669.8px" width="5.4" height="3.2" viewBox="0 0 5.4 3.2"><polygon points="0,0 5.4,0 2.7,3.2" fill="#000"/></svg><div class="t" style="left:0.00px;top:-10.16px;font-size:12px;line-height:12px;color:#111;"></div>
<div class="t" style="left:95.84px;top:666.11px;font-size:12.51px;line-height:12.51px;color:#111;transform:scaleX(0.9430);transform-origin:0 0;">Vrms</div>
<svg style="left:170px;top:663px" width="16" height="16" viewBox="0 0 16 16"><rect width="16" height="16" fill="#253f50"/><rect x="1" y="3" width="14" height="2" fill="#fff"/><rect x="1" y="5" width="14" height="2.6" fill="#4b5a8c"/><rect x="1" y="7.6" width="14" height="3" fill="#4a7a87"/><rect x="1" y="10.8" width="14" height="2.2" fill="#fff"/><polyline points="1,10.6 4.5,6.6 7.5,10.6 14.6,4" stroke="#fff" stroke-width="1" fill="none"/></svg>
<svg style="left:188px;top:670px" width="5" height="3" viewBox="0 0 5 3"><polygon points="0,0 5,0 2.5,3" fill="#000"/></svg>
<svg style="left:200px;top:663px" width="16" height="16" viewBox="0 0 16 16"><rect width="16" height="16" fill="#253f50"/><polygon points="6.66,3.60 7.39,1.83 8.61,1.83 9.34,3.60 10.17,3.94 11.93,3.21 12.79,4.07 12.06,5.83 12.40,6.66 14.17,7.39 14.17,8.61 12.40,9.34 12.06,10.17 12.79,11.93 11.93,12.79 10.17,12.06 9.34,12.40 8.61,14.17 7.39,14.17 6.66,12.40 5.83,12.06 4.07,12.79 3.21,11.93 3.94,10.17 3.60,9.34 1.83,8.61 1.83,7.39 3.60,6.66 3.94,5.83 3.21,4.07 4.07,3.21 5.83,3.94" fill="#fff"/><circle cx="8" cy="8" r="2" fill="#2c3f66"/></svg>
<div class="r" style="left:671px;top:664px;width:1px;height:15px;background:#b8bcbe;"></div><div class="r" style="left:672px;top:664px;width:1px;height:15px;background:#fafcfc;"></div>
<svg style="left:679px;top:665px" width="12" height="12" viewBox="0 0 12 12"><path d="M0 0H3.8V2H2V10H10V8H12V12H0Z" fill="#1b3c82"/><path d="M5.5 0H12V6.5Z" fill="#1b3c82"/><path d="M5 7L9.5 2.5" stroke="#1b3c82" stroke-width="2" stroke-linecap="round"/></svg>
<svg style="left:703px;top:666px" width="10" height="10" viewBox="0 0 10 10"><path d="M1 1L9 9M9 1L1 9" stroke="#1e3848" stroke-width="2.1" stroke-linecap="round"/></svg>
<div class="r" style="left:3px;top:684px;width:718px;height:1px;background:#a0a0a0;"></div>
<div class="r" style="left:3px;top:685px;width:718px;height:1px;background:#ffffff;"></div>
<div class="t" style="left:9.76px;top:704.66px;font-size:31.59px;line-height:31.59px;color:#111;transform:scaleX(0.9105);transform-origin:0 0;-webkit-text-stroke:0.9px #dae3e6;">Ch1</div>
<div class="t" style="left:9.48px;top:767.46px;font-size:31.59px;line-height:31.59px;color:#111;transform:scaleX(0.9612);transform-origin:0 0;-webkit-text-stroke:0.9px #dae3e6;">Ch2</div>
<svg style="left:173px;top:713.6px" width="10.5" height="10" viewBox="0 0 10.5 10"><polygon points="0,0 10.5,0 5.25,10" fill="#000"/></svg>
<svg style="left:173px;top:776.6px" width="10.5" height="10" viewBox="0 0 10.5 10"><polygon points="0,0 10.5,0 5.25,10" fill="#000"/></svg>
<div class="r" style="left:186px;top:689px;width:526px;height:123px;background:#000;"></div>
<div class="r" style="left:5px;top:749px;width:708px;height:1px;background:#a3a9ac;"></div>
<div class="r" style="left:5px;top:750px;width:708px;height:1px;background:#e8edef;"></div>
<div class="r" style="left:185px;top:751px;width:528px;height:1px;background:#a8aeb1;"></div>
<div class="r" style="left:185px;top:730px;width:1px;height:18px;background:#a3aaad;"></div>
<div class="r" style="left:712px;top:730px;width:1px;height:18px;background:#a3aaad;"></div>
<div class="r" style="left:186px;top:730px;width:526px;height:18px;background:#d4d4d4;"></div>
<div class="r" style="left:187px;top:731px;width:524px;height:16px;background:#808080;"></div>
<div class="r" style="left:187px;top:731px;width:389.70000000000005px;height:16px;background:#00ff00;"></div>
<div class="r" style="left:187.3px;top:737px;width:388.99999999999994px;height:3px;background:#000;"></div>
<div class="r" style="left:185px;top:752px;width:1px;height:18px;background:#a3aaad;"></div>
<div class="r" style="left:712px;top:752px;width:1px;height:18px;background:#a3aaad;"></div>
<div class="r" style="left:186px;top:752px;width:526px;height:18px;background:#d4d4d4;"></div>
<div class="r" style="left:187px;top:753px;width:524px;height:16px;background:#808080;"></div>
<div class="r" style="left:187px;top:753px;width:389.70000000000005px;height:16px;background:#00ff00;"></div>
<div class="r" style="left:187.3px;top:759px;width:389.90000000000003px;height:3px;background:#000;"></div>
<div class="t" style="left:519.32px;top:694.38px;font-size:33.69px;line-height:33.69px;color:#00ff00;transform:scaleX(0.9002);transform-origin:0 0;">4.037</div>
<div class="t" style="left:633.44px;top:693.35px;font-size:34.91px;line-height:34.91px;color:#00ff00;transform:scaleX(0.9057);transform-origin:0 0;">Vrms</div>
<div class="t" style="left:519.22px;top:774.48px;font-size:33.69px;line-height:33.69px;color:#00ff00;transform:scaleX(0.8941);transform-origin:0 0;">4.075</div>
<div class="t" style="left:633.44px;top:773.45px;font-size:34.91px;line-height:34.91px;color:#00ff00;transform:scaleX(0.9057);transform-origin:0 0;">Vrms</div>
<div class="t" style="left:731.34px;top:663.71px;font-size:15.59px;line-height:15.59px;font-weight:bold;color:#000;transform:scaleX(1.0535);transform-origin:0 0;">THD+N Ratio</div>
<div class="r" style="left:839px;top:660px;width:75px;height:23px;background:#fff;"></div><div class="r" style="left:902px;top:661px;width:11px;height:21px;background:#f8f8f8;"></div><svg style="left:904.5px;top:669.8px" width="5.4" height="3.2" viewBox="0 0 5.4 3.2"><polygon points="0,0 5.4,0 2.7,3.2" fill="#000"/></svg><div class="t" style="left:0.00px;top:-10.16px;font-size:12px;line-height:12px;color:#111;"></div>
<div class="t" style="left:843.30px;top:666.23px;font-size:12.37px;line-height:12.37px;color:#111;transform:scaleX(0.9264);transform-origin:0 0;">%</div>
<svg style="left:917px;top:663px" width="16" height="16" viewBox="0 0 16 16"><rect width="16" height="16" fill="#253f50"/><rect x="1" y="3" width="14" height="2" fill="#fff"/><rect x="1" y="5" width="14" height="2.6" fill="#4b5a8c"/><rect x="1" y="7.6" width="14" height="3" fill="#4a7a87"/><rect x="1" y="10.8" width="14" height="2.2" fill="#fff"/><polyline points="1,10.6 4.5,6.6 7.5,10.6 14.6,4" stroke="#fff" stroke-width="1" fill="none"/></svg>
<svg style="left:935px;top:670px" width="5" height="3" viewBox="0 0 5 3"><polygon points="0,0 5,0 2.5,3" fill="#000"/></svg>
<svg style="left:947px;top:663px" width="16" height="16" viewBox="0 0 16 16"><rect width="16" height="16" fill="#253f50"/><polygon points="6.66,3.60 7.39,1.83 8.61,1.83 9.34,3.60 10.17,3.94 11.93,3.21 12.79,4.07 12.06,5.83 12.40,6.66 14.17,7.39 14.17,8.61 12.40,9.34 12.06,10.17 12.79,11.93 11.93,12.79 10.17,12.06 9.34,12.40 8.61,14.17 7.39,14.17 6.66,12.40 5.83,12.06 4.07,12.79 3.21,11.93 3.94,10.17 3.60,9.34 1.83,8.61 1.83,7.39 3.60,6.66 3.94,5.83 3.21,4.07 4.07,3.21 5.83,3.94" fill="#fff"/><circle cx="8" cy="8" r="2" fill="#2c3f66"/></svg>
<div class="r" style="left:1395px;top:664px;width:1px;height:15px;background:#b8bcbe;"></div><div class="r" style="left:1396px;top:664px;width:1px;height:15px;background:#fafcfc;"></div>
<svg style="left:1403px;top:665px" width="12" height="12" viewBox="0 0 12 12"><path d="M0 0H3.8V2H2V10H10V8H12V12H0Z" fill="#1b3c82"/><path d="M5.5 0H12V6.5Z" fill="#1b3c82"/><path d="M5 7L9.5 2.5" stroke="#1b3c82" stroke-width="2" stroke-linecap="round"/></svg>
<svg style="left:1427px;top:666px" width="10" height="10" viewBox="0 0 10 10"><path d="M1 1L9 9M9 1L1 9" stroke="#1e3848" stroke-width="2.1" stroke-linecap="round"/></svg>
<div class="r" style="left:727px;top:684px;width:718px;height:1px;background:#a0a0a0;"></div>
<div class="r" style="left:727px;top:685px;width:718px;height:1px;background:#ffffff;"></div>
<div class="t" style="left:733.76px;top:704.66px;font-size:31.59px;line-height:31.59px;color:#111;transform:scaleX(0.9105);transform-origin:0 0;-webkit-text-stroke:0.9px #dae3e6;">Ch1</div>
<div class="t" style="left:733.48px;top:767.46px;font-size:31.59px;line-height:31.59px;color:#111;transform:scaleX(0.9612);transform-origin:0 0;-webkit-text-stroke:0.9px #dae3e6;">Ch2</div>
<svg style="left:897px;top:713.6px" width="10.5" height="10" viewBox="0 0 10.5 10"><polygon points="0,0 10.5,0 5.25,10" fill="#000"/></svg>
<svg style="left:897px;top:776.6px" width="10.5" height="10" viewBox="0 0 10.5 10"><polygon points="0,0 10.5,0 5.25,10" fill="#000"/></svg>
<div class="r" style="left:910px;top:689px;width:526px;height:123px;background:#000;"></div>
<div class="r" style="left:729px;top:749px;width:708px;height:1px;background:#a3a9ac;"></div>
<div class="r" style="left:729px;top:750px;width:708px;height:1px;background:#e8edef;"></div>
<div class="r" style="left:909px;top:751px;width:528px;height:1px;background:#a8aeb1;"></div>
<div class="r" style="left:909px;top:730px;width:1px;height:18px;background:#a3aaad;"></div>
<div class="r" style="left:1436px;top:730px;width:1px;height:18px;background:#a3aaad;"></div>
<div class="r" style="left:910px;top:730px;width:526px;height:18px;background:#d4d4d4;"></div>
<div class="r" style="left:911px;top:731px;width:524px;height:16px;background:#808080;"></div>
<div class="r" style="left:911px;top:731px;width:160.75px;height:16px;background:#00ff00;"></div>
<div class="r" style="left:1070px;top:737px;width:364.70000000000005px;height:3px;background:#000;"></div>
<div class="r" style="left:909px;top:752px;width:1px;height:18px;background:#a3aaad;"></div>
<div class="r" style="left:1436px;top:752px;width:1px;height:18px;background:#a3aaad;"></div>
<div class="r" style="left:910px;top:752px;width:526px;height:18px;background:#d4d4d4;"></div>
<div class="r" style="left:911px;top:753px;width:524px;height:16px;background:#808080;"></div>
<div class="r" style="left:911px;top:753px;width:152.5999999999999px;height:16px;background:#00ff00;"></div>
<div class="r" style="left:1063px;top:759px;width:371.70000000000005px;height:3px;background:#000;"></div>
<div class="t" style="left:1255.90px;top:694.38px;font-size:33.69px;line-height:33.69px;color:#00ff00;transform:scaleX(0.8919);transform-origin:0 0;">0.006715</div>
<div class="t" style="left:1404.34px;top:693.67px;font-size:34.53px;line-height:34.53px;color:#00ff00;transform:scaleX(0.8793);transform-origin:0 0;">%</div>
<div class="t" style="left:1255.89px;top:774.48px;font-size:33.69px;line-height:33.69px;color:#00ff00;transform:scaleX(0.9008);transform-origin:0 0;">0.005510</div>
<div class="t" style="left:1404.34px;top:773.77px;font-size:34.53px;line-height:34.53px;color:#00ff00;transform:scaleX(0.8793);transform-origin:0 0;">%</div>
<div class="t" style="left:6.54px;top:826.99px;font-size:16.44px;line-height:16.44px;font-weight:bold;color:#000;transform:scaleX(0.9524);transform-origin:0 0;">Frequency</div>
<div class="r" style="left:93px;top:824px;width:75px;height:23px;background:#fff;"></div><div class="r" style="left:156px;top:825px;width:11px;height:21px;background:#f8f8f8;"></div><svg style="left:158.5px;top:833.8px" width="5.4" height="3.2" viewBox="0 0 5.4 3.2"><polygon points="0,0 5.4,0 2.7,3.2" fill="#000"/></svg><div class="t" style="left:0.00px;top:-10.16px;font-size:12px;line-height:12px;color:#111;"></div>
<div class="t" style="left:96.69px;top:830.11px;font-size:12.51px;line-height:12.51px;color:#111;transform:scaleX(0.9754);transform-origin:0 0;">Hz</div>
<svg style="left:171px;top:827px" width="16" height="16" viewBox="0 0 16 16"><rect width="16" height="16" fill="#253f50"/><rect x="1" y="3" width="14" height="2" fill="#fff"/><rect x="1" y="5" width="14" height="2.6" fill="#4b5a8c"/><rect x="1" y="7.6" width="14" height="3" fill="#4a7a87"/><rect x="1" y="10.8" width="14" height="2.2" fill="#fff"/><polyline points="1,10.6 4.5,6.6 7.5,10.6 14.6,4" stroke="#fff" stroke-width="1" fill="none"/></svg>
<svg style="left:189px;top:834px" width="5" height="3" viewBox="0 0 5 3"><polygon points="0,0 5,0 2.5,3" fill="#000"/></svg>
<svg style="left:201px;top:827px" width="16" height="16" viewBox="0 0 16 16"><rect width="16" height="16" fill="#253f50"/><polygon points="6.66,3.60 7.39,1.83 8.61,1.83 9.34,3.60 10.17,3.94 11.93,3.21 12.79,4.07 12.06,5.83 12.40,6.66 14.17,7.39 14.17,8.61 12.40,9.34 12.06,10.17 12.79,11.93 11.93,12.79 10.17,12.06 9.34,12.40 8.61,14.17 7.39,14.17 6.66,12.40 5.83,12.06 4.07,12.79 3.21,11.93 3.94,10.17 3.60,9.34 1.83,8.61 1.83,7.39 3.60,6.66 3.94,5.83 3.21,4.07 4.07,3.21 5.83,3.94" fill="#fff"/><circle cx="8" cy="8" r="2" fill="#2c3f66"/></svg>
<div class="r" style="left:671px;top:828px;width:1px;height:15px;background:#b8bcbe;"></div><div class="r" style="left:672px;top:828px;width:1px;height:15px;background:#fafcfc;"></div>
<svg style="left:679px;top:829px" width="12" height="12" viewBox="0 0 12 12"><path d="M0 0H3.8V2H2V10H10V8H12V12H0Z" fill="#1b3c82"/><path d="M5.5 0H12V6.5Z" fill="#1b3c82"/><path d="M5 7L9.5 2.5" stroke="#1b3c82" stroke-width="2" stroke-linecap="round"/></svg>
<svg style="left:703px;top:830px" width="10" height="10" viewBox="0 0 10 10"><path d="M1 1L9 9M9 1L1 9" stroke="#1e3848" stroke-width="2.1" stroke-linecap="round"/></svg>
<div class="r" style="left:3px;top:848px;width:718px;height:1px;background:#a0a0a0;"></div>
<div class="r" style="left:3px;top:849px;width:718px;height:1px;background:#ffffff;"></div>
<div class="t" style="left:9.76px;top:868.66px;font-size:31.59px;line-height:31.59px;color:#111;transform:scaleX(0.9105);transform-origin:0 0;-webkit-text-stroke:0.9px #dae3e6;">Ch1</div>
<div class="t" style="left:9.48px;top:931.46px;font-size:31.59px;line-height:31.59px;color:#111;transform:scaleX(0.9612);transform-origin:0 0;-webkit-text-stroke:0.9px #dae3e6;">Ch2</div>
<svg style="left:173px;top:877.6px" width="10.5" height="10" viewBox="0 0 10.5 10"><polygon points="0,0 10.5,0 5.25,10" fill="#000"/></svg>
<svg style="left:173px;top:940.6px" width="10.5" height="10" viewBox="0 0 10.5 10"><polygon points="0,0 10.5,0 5.25,10" fill="#000"/></svg>
<div class="r" style="left:186px;top:853px;width:526px;height:123px;background:#000;"></div>
<div class="r" style="left:5px;top:913px;width:708px;height:1px;background:#a3a9ac;"></div>
<div class="r" style="left:5px;top:914px;width:708px;height:1px;background:#e8edef;"></div>
<div class="r" style="left:185px;top:915px;width:528px;height:1px;background:#a8aeb1;"></div>
<div class="r" style="left:185px;top:894px;width:1px;height:18px;background:#a3aaad;"></div>
<div class="r" style="left:712px;top:894px;width:1px;height:18px;background:#a3aaad;"></div>
<div class="r" style="left:186px;top:894px;width:526px;height:18px;background:#d4d4d4;"></div>
<div class="r" style="left:187px;top:895px;width:524px;height:16px;background:#808080;"></div>
<div class="r" style="left:187px;top:895px;width:297.7px;height:16px;background:#00ff00;"></div>
<div class="r" style="left:187.3px;top:901px;width:523.4000000000001px;height:3px;background:#000;"></div>
<div class="r" style="left:185px;top:916px;width:1px;height:18px;background:#a3aaad;"></div>
<div class="r" style="left:712px;top:916px;width:1px;height:18px;background:#a3aaad;"></div>
<div class="r" style="left:186px;top:916px;width:526px;height:18px;background:#d4d4d4;"></div>
<div class="r" style="left:187px;top:917px;width:524px;height:16px;background:#808080;"></div>
<div class="r" style="left:187px;top:917px;width:297.7px;height:16px;background:#00ff00;"></div>
<div class="r" style="left:187.3px;top:923px;width:523.4000000000001px;height:3px;background:#000;"></div>
<div class="t" style="left:513.53px;top:858.38px;font-size:33.69px;line-height:33.69px;color:#00ff00;transform:scaleX(0.8970);transform-origin:0 0;">1.00002</div>
<div class="t" style="left:652.80px;top:858.64px;font-size:33.38px;line-height:33.38px;color:#00ff00;transform:scaleX(0.9781);transform-origin:0 0;">kHz</div>
<div class="t" style="left:513.53px;top:938.48px;font-size:33.69px;line-height:33.69px;color:#00ff00;transform:scaleX(0.8970);transform-origin:0 0;">1.00002</div>
<div class="t" style="left:652.80px;top:938.74px;font-size:33.38px;line-height:33.38px;color:#00ff00;transform:scaleX(0.9781);transform-origin:0 0;">kHz</div>
<div class="t" style="left:730.82px;top:827.19px;font-size:16.20px;line-height:16.20px;font-weight:bold;color:#000;transform:scaleX(0.9970);transform-origin:0 0;">SINAD</div>
<div class="r" style="left:788px;top:824px;width:75px;height:23px;background:#fff;"></div><div class="r" style="left:851px;top:825px;width:11px;height:21px;background:#f8f8f8;"></div><svg style="left:853.5px;top:833.8px" width="5.4" height="3.2" viewBox="0 0 5.4 3.2"><polygon points="0,0 5.4,0 2.7,3.2" fill="#000"/></svg><div class="t" style="left:0.00px;top:-10.16px;font-size:12px;line-height:12px;color:#111;"></div>
<div class="t" style="left:792.11px;top:830.66px;font-size:11.86px;line-height:11.86px;color:#111;transform:scaleX(0.9795);transform-origin:0 0;">dB</div>
<svg style="left:866px;top:827px" width="16" height="16" viewBox="0 0 16 16"><rect width="16" height="16" fill="#253f50"/><rect x="1" y="3" width="14" height="2" fill="#fff"/><rect x="1" y="5" width="14" height="2.6" fill="#4b5a8c"/><rect x="1" y="7.6" width="14" height="3" fill="#4a7a87"/><rect x="1" y="10.8" width="14" height="2.2" fill="#fff"/><polyline points="1,10.6 4.5,6.6 7.5,10.6 14.6,4" stroke="#fff" stroke-width="1" fill="none"/></svg>
<svg style="left:884px;top:834px" width="5" height="3" viewBox="0 0 5 3"><polygon points="0,0 5,0 2.5,3" fill="#000"/></svg>
<svg style="left:896px;top:827px" width="16" height="16" viewBox="0 0 16 16"><rect width="16" height="16" fill="#253f50"/><polygon points="6.66,3.60 7.39,1.83 8.61,1.83 9.34,3.60 10.17,3.94 11.93,3.21 12.79,4.07 12.06,5.83 12.40,6.66 14.17,7.39 14.17,8.61 12.40,9.34 12.06,10.17 12.79,11.93 11.93,12.79 10.17,12.06 9.34,12.40 8.61,14.17 7.39,14.17 6.66,12.40 5.83,12.06 4.07,12.79 3.21,11.93 3.94,10.17 3.60,9.34 1.83,8.61 1.83,7.39 3.60,6.66 3.94,5.83 3.21,4.07 4.07,3.21 5.83,3.94" fill="#fff"/><circle cx="8" cy="8" r="2" fill="#2c3f66"/></svg>
<div class="r" style="left:1395px;top:828px;width:1px;height:15px;background:#b8bcbe;"></div><div class="r" style="left:1396px;top:828px;width:1px;height:15px;background:#fafcfc;"></div>
<svg style="left:1403px;top:829px" width="12" height="12" viewBox="0 0 12 12"><path d="M0 0H3.8V2H2V10H10V8H12V12H0Z" fill="#1b3c82"/><path d="M5.5 0H12V6.5Z" fill="#1b3c82"/><path d="M5 7L9.5 2.5" stroke="#1b3c82" stroke-width="2" stroke-linecap="round"/></svg>
<svg style="left:1427px;top:830px" width="10" height="10" viewBox="0 0 10 10"><path d="M1 1L9 9M9 1L1 9" stroke="#1e3848" stroke-width="2.1" stroke-linecap="round"/></svg>
<div class="r" style="left:727px;top:848px;width:718px;height:1px;background:#a0a0a0;"></div>
<div class="r" style="left:727px;top:849px;width:718px;height:1px;background:#ffffff;"></div>
<div class="t" style="left:733.76px;top:868.66px;font-size:31.59px;line-height:31.59px;color:#111;transform:scaleX(0.9105);transform-origin:0 0;-webkit-text-stroke:0.9px #dae3e6;">Ch1</div>
<div class="t" style="left:733.48px;top:931.46px;font-size:31.59px;line-height:31.59px;color:#111;transform:scaleX(0.9612);transform-origin:0 0;-webkit-text-stroke:0.9px #dae3e6;">Ch2</div>
<svg style="left:897px;top:877.6px" width="10.5" height="10" viewBox="0 0 10.5 10"><polygon points="0,0 10.5,0 5.25,10" fill="#000"/></svg>
<svg style="left:897px;top:940.6px" width="10.5" height="10" viewBox="0 0 10.5 10"><polygon points="0,0 10.5,0 5.25,10" fill="#000"/></svg>
<div class="r" style="left:910px;top:853px;width:526px;height:123px;background:#000;"></div>
<div class="r" style="left:729px;top:913px;width:708px;height:1px;background:#a3a9ac;"></div>
<div class="r" style="left:729px;top:914px;width:708px;height:1px;background:#e8edef;"></div>
<div class="r" style="left:909px;top:915px;width:528px;height:1px;background:#a8aeb1;"></div>
<div class="r" style="left:909px;top:894px;width:1px;height:18px;background:#a3aaad;"></div>
<div class="r" style="left:1436px;top:894px;width:1px;height:18px;background:#a3aaad;"></div>
<div class="r" style="left:910px;top:894px;width:526px;height:18px;background:#d4d4d4;"></div>
<div class="r" style="left:911px;top:895px;width:524px;height:16px;background:#808080;"></div>
<div class="r" style="left:911px;top:895px;width:365px;height:16px;background:#00ff00;"></div>
<div class="r" style="left:911.3px;top:901px;width:364.70000000000005px;height:3px;background:#000;"></div>
<div class="r" style="left:909px;top:916px;width:1px;height:18px;background:#a3aaad;"></div>
<div class="r" style="left:1436px;top:916px;width:1px;height:18px;background:#a3aaad;"></div>
<div class="r" style="left:910px;top:916px;width:526px;height:18px;background:#d4d4d4;"></div>
<div class="r" style="left:911px;top:917px;width:524px;height:16px;background:#808080;"></div>
<div class="r" style="left:911px;top:917px;width:372.79999999999995px;height:16px;background:#00ff00;"></div>
<div class="r" style="left:911.3px;top:923px;width:372.0px;height:3px;background:#000;"></div>
<div class="t" style="left:1274.61px;top:858.38px;font-size:33.69px;line-height:33.69px;color:#00ff00;transform:scaleX(0.9014);transform-origin:0 0;">83.459</div>
<div class="t" style="left:1392.88px;top:858.64px;font-size:33.38px;line-height:33.38px;color:#00ff00;transform:scaleX(0.9326);transform-origin:0 0;">dB</div>
<div class="t" style="left:1274.61px;top:938.48px;font-size:33.69px;line-height:33.69px;color:#00ff00;transform:scaleX(0.8989);transform-origin:0 0;">85.177</div>
<div class="t" style="left:1392.88px;top:938.74px;font-size:33.38px;line-height:33.38px;color:#00ff00;transform:scaleX(0.9326);transform-origin:0 0;">dB</div>
</body></html>
